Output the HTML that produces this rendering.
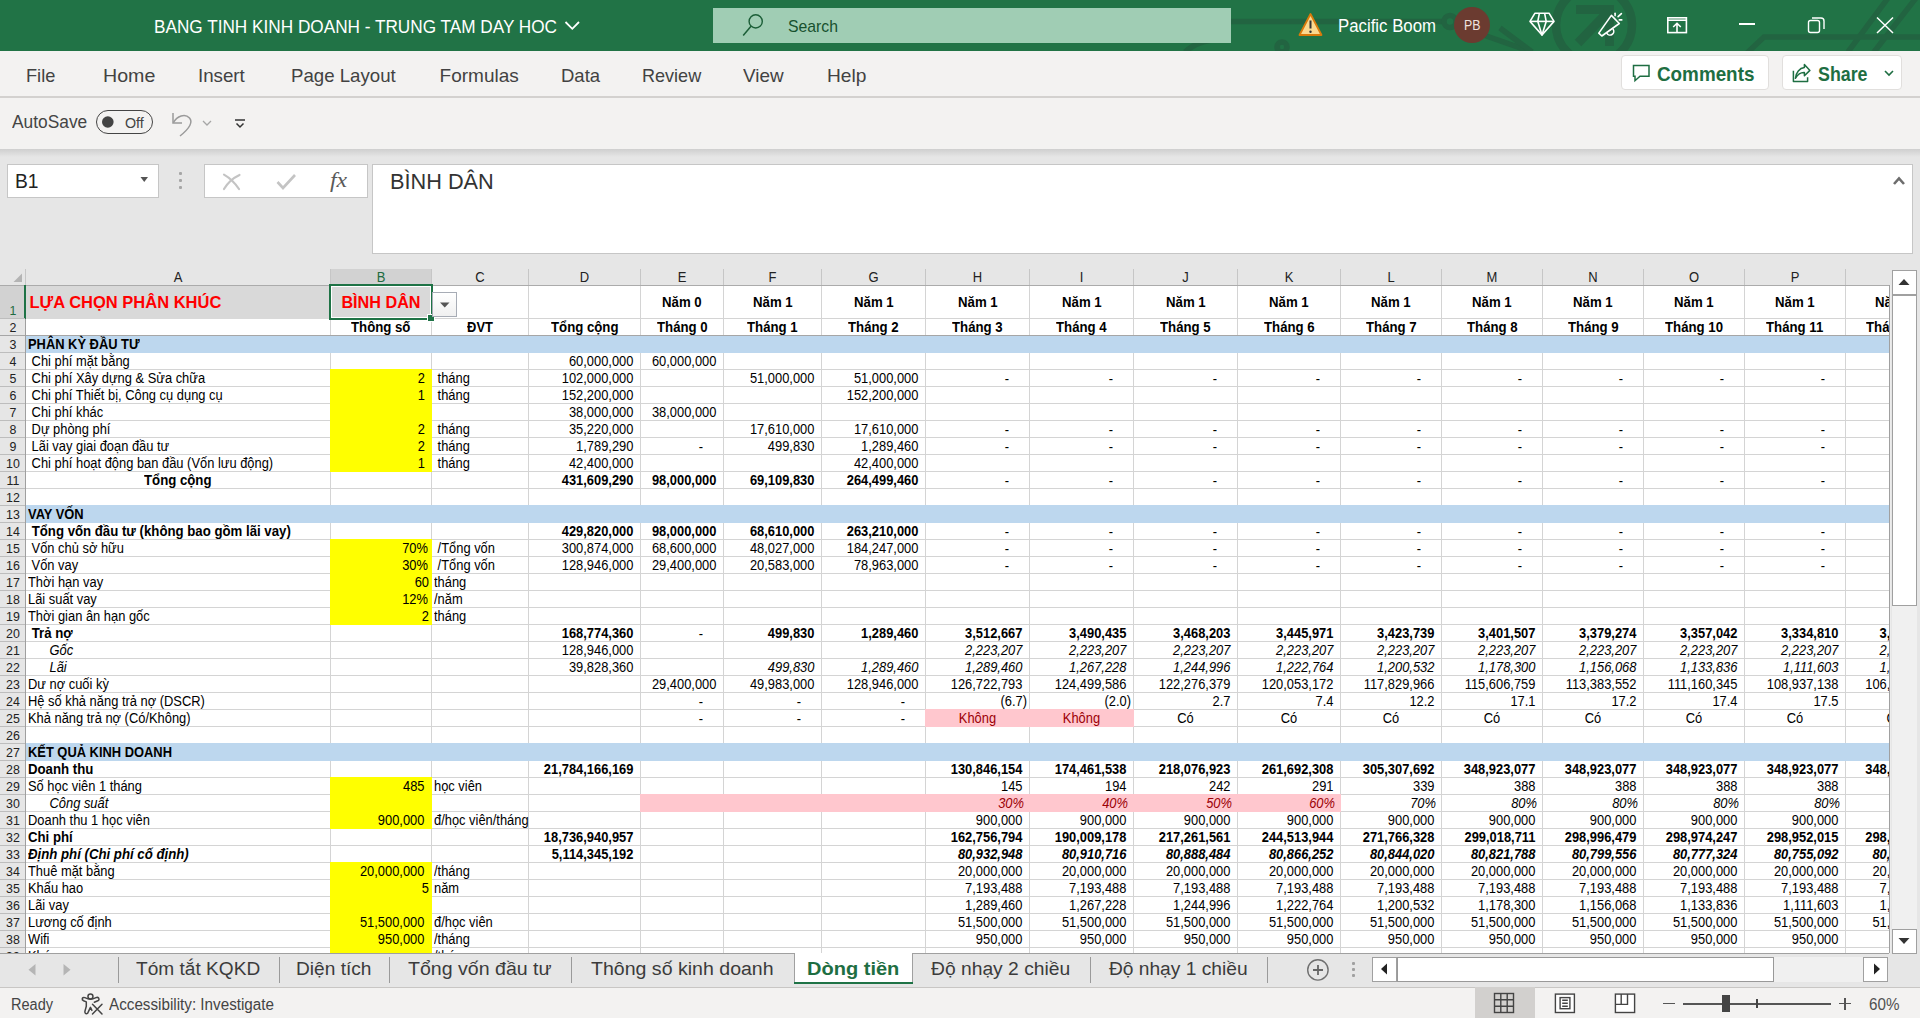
<!DOCTYPE html><html><head><meta charset="utf-8"><style>
html,body{margin:0;padding:0;}
body{width:1920px;height:1018px;overflow:hidden;position:relative;background:#e6e6e6;font-family:"Liberation Sans",sans-serif;}
.t{position:absolute;white-space:pre;line-height:1.117;}
.r{position:absolute;}
svg{position:absolute;}
#grid{position:absolute;left:0;top:269px;width:1889px;height:684px;overflow:hidden;}
#grid .t{line-height:1.117;}
</style></head><body>
<div class="r" style="left:0px;top:0px;width:1920px;height:51px;background:#217346;"></div>
<svg style="left:0;top:0" width="1920" height="51" viewBox="0 0 1920 51">
<g fill="none" stroke="#226441" stroke-width="5.5">
<path d="M1231 21.5 H1444"/><circle cx="1450" cy="21.5" r="6"/><path d="M1455 25 L1532 52"/>
<path d="M1185 52 Q1200 38 1225 40"/><circle cx="1282" cy="47" r="5"/>
<path d="M1500 28 L1532 52"/>
</g>
<g fill="none" stroke="#226441">
<circle cx="1594" cy="25" r="38" stroke-width="8.5"/>
<path d="M1576 9.5 H1609.5 V46" stroke-width="9"/>
<path d="M1607 13 L1578 43" stroke-width="9"/>
<path d="M1848 52 L1888 -2" stroke-width="5.5"/><path d="M1874 52 L1916 -2" stroke-width="5.5"/>
<path d="M1747 53 L1764 37 H1920" stroke-width="5.5"/>
</g></svg>
<div class="t" style="left:154.00px;top:16.71px;font-size:18.00px;color:#fff;transform:scale(0.9549,1.0000);transform-origin:0 16.29px;">BANG TINH KINH DOANH - TRUNG TAM DAY HOC</div>
<svg style="left:563px;top:20px" width="18" height="12"><path d="M2.5 2 L9.3 8.8 L16 2" fill="none" stroke="#fff" stroke-width="1.8"/></svg>
<div class="r" style="left:713px;top:8px;width:518px;height:35px;background:#a0cdb4;"></div>
<svg style="left:740px;top:12px" width="26" height="26"><circle cx="15.7" cy="9.4" r="6.6" fill="none" stroke="#1b5e37" stroke-width="1.4"/><path d="M11 14.3 L3.2 23.4" stroke="#1b5e37" stroke-width="1.5" fill="none"/></svg>
<div class="t" style="left:788.00px;top:16.62px;font-size:17.00px;color:#17512e;transform:scale(0.9282,1.0000);transform-origin:0 15.38px;">Search</div>
<svg style="left:1298px;top:12px" width="26" height="26"><path d="M12.5 2 L23.5 23 H1.5 Z" fill="#fbd98f" stroke="#d97a0b" stroke-width="1.8" stroke-linejoin="round"/><path d="M12.5 8.5 V16.5" stroke="#333" stroke-width="2"/><circle cx="12.5" cy="19.8" r="1.2" fill="#333"/></svg>
<div class="t" style="left:1338.00px;top:16.96px;font-size:17.50px;color:#fff;transform:scale(0.9596,1.0000);transform-origin:0 15.84px;">Pacific Boom</div>
<svg style="left:1453px;top:6px" width="38" height="38"><circle cx="19" cy="19" r="18" fill="#6b3b30"/></svg>
<div class="t" style="left:1463.75px;top:18.13px;font-size:14.00px;color:#f0e2de;transform:scale(0.8834,1.0000);transform-origin:0 12.67px;">PB</div>
<svg style="left:1520px;top:5px" width="40" height="40" viewBox="0 0 40 40"><g fill="none" stroke="#fff" stroke-width="1.6" stroke-linejoin="round">
<path d="M15 8.2 H29 L34 16.4 L22 30 L10 16.4 Z"/><path d="M10 16.4 H34"/><path d="M19.4 8.2 L17.8 16.4 L22 30 L26.2 16.4 L24.6 8.2"/></g></svg>
<svg style="left:1590px;top:5px" width="40" height="40" viewBox="0 0 40 40"><g fill="none" stroke="#fff" stroke-width="1.6" stroke-linejoin="round" stroke-linecap="round">
<path d="M21.4 10.4 L29.3 18.5 L11.8 31 L8.8 28.1 Z"/><path d="M16.9 28.3 A3.6 3.6 0 0 0 23.2 24.4"/><path d="M25.1 8.3 V10.6"/><path d="M28.1 11.6 L31.4 8.6"/><path d="M29.3 14.9 H31.8"/></g></svg>
<svg style="left:1660px;top:5px" width="34" height="36" viewBox="0 0 34 36"><g fill="none" stroke="#fff" stroke-width="1.6">
<rect x="7.8" y="12.8" width="18.6" height="14.8"/><path d="M7.8 15.2 H26.4"/><path d="M17 27.6 V18.5 M13.2 22 L17 18.3 L20.8 22"/></g></svg>
<div class="r" style="left:1739px;top:23px;width:16px;height:1.6px;background:#fff;"></div>
<svg style="left:1804px;top:14px" width="24" height="22" viewBox="0 0 24 22"><g fill="none" stroke="#fff" stroke-width="1.4">
<rect x="4.5" y="6.5" width="11" height="12" rx="2"/><path d="M8 4 H17 A3 3 0 0 1 20 7 V15"/></g></svg>
<svg style="left:1874px;top:14px" width="22" height="22" viewBox="0 0 22 22"><g fill="none" stroke="#fff" stroke-width="1.5">
<path d="M3 3.5 L19 19 M19 3.5 L3 19"/></g></svg>
<div class="r" style="left:0px;top:51px;width:1920px;height:98px;background:#f3f2f1;"></div>
<div class="r" style="left:0px;top:96px;width:1920px;height:2px;background:#d3d1cf;"></div>
<div class="t" style="left:25.70px;top:64.81px;font-size:19.00px;color:#424242;transform:scale(0.9570,1.0000);transform-origin:0 17.20px;">File</div>
<div class="t" style="left:102.70px;top:64.81px;font-size:19.00px;color:#424242;transform:scale(1.0319,1.0000);transform-origin:0 17.20px;">Home</div>
<div class="t" style="left:198.40px;top:64.81px;font-size:19.00px;color:#424242;transform:scale(0.9849,1.0000);transform-origin:0 17.20px;">Insert</div>
<div class="t" style="left:290.60px;top:64.81px;font-size:19.00px;color:#424242;transform:scale(0.9812,1.0000);transform-origin:0 17.20px;">Page Layout</div>
<div class="t" style="left:439.60px;top:64.81px;font-size:19.00px;color:#424242;">Formulas</div>
<div class="t" style="left:560.90px;top:64.81px;font-size:19.00px;color:#424242;transform:scale(0.9742,1.0000);transform-origin:0 17.20px;">Data</div>
<div class="t" style="left:641.60px;top:64.81px;font-size:19.00px;color:#424242;transform:scale(0.9503,1.0000);transform-origin:0 17.20px;">Review</div>
<div class="t" style="left:743.40px;top:64.81px;font-size:19.00px;color:#424242;transform:scale(0.9941,1.0000);transform-origin:0 17.20px;">View</div>
<div class="t" style="left:826.60px;top:64.81px;font-size:19.00px;color:#424242;transform:scale(1.0082,1.0000);transform-origin:0 17.20px;">Help</div>
<div class="r" style="left:1620.5px;top:55.3px;width:148px;height:35px;background:#fff;border:1px solid #e1dfdd;border-radius:4px;box-sizing:border-box;"></div>
<div class="r" style="left:1781.5px;top:55.3px;width:120px;height:35px;background:#fff;border:1px solid #e1dfdd;border-radius:4px;box-sizing:border-box;"></div>
<svg style="left:1630px;top:62px" width="22" height="22" viewBox="0 0 22 22"><path d="M3.5 3.5 H19 V14.3 H10 L5 18.7 V14.3 H3.5 Z" fill="none" stroke="#1e6e42" stroke-width="1.5" stroke-linejoin="miter"/></svg>
<div class="t" style="left:1657.00px;top:63.80px;font-size:19.00px;color:#1e6e42;font-weight:bold;transform:scale(0.9920,1.0900);transform-origin:0 17.20px;">Comments</div>
<svg style="left:1790px;top:62px" width="24" height="24" viewBox="0 0 24 24"><g fill="none" stroke="#1e6e42" stroke-width="1.5" stroke-linejoin="round">
<path d="M3.4 8.7 V19.6 H17.6 V15.3"/><path d="M5.4 16.3 C6 10.5 9.5 6 14.4 5.6 V2.6 L19.9 8.4 L14.4 13.8 V10.6 C10.5 10.4 7.5 12.8 5.4 16.3 Z"/></g></svg>
<div class="t" style="left:1817.50px;top:63.80px;font-size:19.00px;color:#1e6e42;font-weight:bold;transform:scale(0.9374,1.0900);transform-origin:0 17.20px;">Share</div>
<svg style="left:1882px;top:67px" width="14" height="12"><path d="M3 4 L7 8 L11 4" fill="none" stroke="#1e6e42" stroke-width="1.6"/></svg>
<div class="t" style="left:11.50px;top:112.86px;font-size:17.50px;color:#444;transform:scale(0.9909,1.0000);transform-origin:0 15.84px;">AutoSave</div>
<div class="r" style="left:96px;top:110px;width:57px;height:24px;background:transparent;border:1px solid #444;border-radius:12px;box-sizing:border-box;"></div>
<svg style="left:100px;top:115px" width="14" height="14"><circle cx="7.8" cy="7" r="5.8" fill="#444"/></svg>
<div class="t" style="left:125.30px;top:114.68px;font-size:14.50px;color:#444;transform:scale(0.9857,1.0000);transform-origin:0 13.12px;">Off</div>
<svg style="left:168px;top:108px" width="30" height="32" viewBox="0 0 30 32"><g fill="none" stroke="#9a9a9a" stroke-width="1.5">
<path d="M5 5 V15 H14"/><path d="M5.5 14.5 C9 8 17 5 21.5 10 C25 14 22 20 12 28"/></g></svg>
<svg style="left:201px;top:118px" width="12" height="10"><path d="M2 3 L6 7 L10 3" fill="none" stroke="#a6a6a6" stroke-width="1.3"/></svg>
<svg style="left:232px;top:116px" width="16" height="14"><g fill="none" stroke="#333" stroke-width="1.5"><path d="M3 4 H13"/><path d="M4.5 7.5 L8 11 L11.5 7.5"/></g></svg>
<div class="r" style="left:3px;top:9px;width:1px;height:1px;background:transparent;"></div>
<div class="r" style="left:0px;top:149px;width:1920px;height:8px;background:linear-gradient(#cfcfcf,#e6e6e6);"></div>
<div class="r" style="left:7px;top:164px;width:152px;height:34px;background:#fff;border:1px solid #c6c6c6;box-sizing:border-box;"></div>
<div class="t" style="left:15.00px;top:168.69px;font-size:21.00px;color:#222;transform:scale(0.9149,1.0000);transform-origin:0 19.00px;">B1</div>
<svg style="left:138px;top:174px" width="12" height="10"><path d="M2.5 3 H10 L6.25 8 Z" fill="#555"/></svg>
<div class="r" style="left:179px;top:172px;width:3px;height:3px;background:#a6a6a6;border-radius:1px;"></div>
<div class="r" style="left:179px;top:179px;width:3px;height:3px;background:#a6a6a6;border-radius:1px;"></div>
<div class="r" style="left:179px;top:186px;width:3px;height:3px;background:#a6a6a6;border-radius:1px;"></div>
<div class="r" style="left:204px;top:164px;width:164px;height:34px;background:#fff;border:1px solid #c6c6c6;box-sizing:border-box;"></div>
<svg style="left:220px;top:171px" width="24" height="22"><path d="M4 3.6 C10 7 15 12 19 18 M19.5 4 C12 7.5 7 13 4 18" fill="none" stroke="#c4c4c4" stroke-width="2.2" stroke-linecap="round"/></svg>
<svg style="left:274px;top:171px" width="26" height="22"><path d="M3.5 11 L9 17 L21 4" fill="none" stroke="#c4c4c4" stroke-width="2.6"/></svg>
<div class="t" style="left:330.00px;top:167.59px;font-size:22.00px;color:#5a5a5a;font-style:italic;transform:scale(1.0811,1.0000);transform-origin:0 19.91px;font-family:'Liberation Serif',serif;">fx</div>
<div class="r" style="left:372px;top:164px;width:1541px;height:90px;background:#fff;border:1px solid #c6c6c6;box-sizing:border-box;"></div>
<div class="t" style="left:390.30px;top:169.54px;font-size:21.50px;color:#333;transform:scale(1.0094,1.0000);transform-origin:0 19.46px;">BÌNH DÂN</div>
<svg style="left:1890px;top:173px" width="18" height="14"><path d="M4 11 L9 5.5 L14 11" fill="none" stroke="#6d6d6d" stroke-width="2.6"/></svg>
<div id="g" style="position:absolute;left:0;top:0;width:1889px;height:953px;overflow:hidden;">
<div class="r" style="left:26px;top:286px;width:1863px;height:667px;background:#fff;"></div>
<div class="r" style="left:330px;top:286px;width:1px;height:667px;background:#d4d4d4;"></div>
<div class="r" style="left:431px;top:286px;width:1px;height:667px;background:#d4d4d4;"></div>
<div class="r" style="left:528px;top:286px;width:1px;height:667px;background:#d4d4d4;"></div>
<div class="r" style="left:640px;top:286px;width:1px;height:667px;background:#d4d4d4;"></div>
<div class="r" style="left:723px;top:286px;width:1px;height:667px;background:#d4d4d4;"></div>
<div class="r" style="left:821px;top:286px;width:1px;height:667px;background:#d4d4d4;"></div>
<div class="r" style="left:925px;top:286px;width:1px;height:667px;background:#d4d4d4;"></div>
<div class="r" style="left:1029px;top:286px;width:1px;height:667px;background:#d4d4d4;"></div>
<div class="r" style="left:1133px;top:286px;width:1px;height:667px;background:#d4d4d4;"></div>
<div class="r" style="left:1237px;top:286px;width:1px;height:667px;background:#d4d4d4;"></div>
<div class="r" style="left:1340px;top:286px;width:1px;height:667px;background:#d4d4d4;"></div>
<div class="r" style="left:1441px;top:286px;width:1px;height:667px;background:#d4d4d4;"></div>
<div class="r" style="left:1542px;top:286px;width:1px;height:667px;background:#d4d4d4;"></div>
<div class="r" style="left:1643px;top:286px;width:1px;height:667px;background:#d4d4d4;"></div>
<div class="r" style="left:1744px;top:286px;width:1px;height:667px;background:#d4d4d4;"></div>
<div class="r" style="left:1845px;top:286px;width:1px;height:667px;background:#d4d4d4;"></div>
<div class="r" style="left:26px;top:318px;width:1863px;height:1px;background:#d4d4d4;"></div>
<div class="r" style="left:26px;top:335px;width:1863px;height:1px;background:#d4d4d4;"></div>
<div class="r" style="left:26px;top:352px;width:1863px;height:1px;background:#d4d4d4;"></div>
<div class="r" style="left:26px;top:369px;width:1863px;height:1px;background:#d4d4d4;"></div>
<div class="r" style="left:26px;top:386px;width:1863px;height:1px;background:#d4d4d4;"></div>
<div class="r" style="left:26px;top:403px;width:1863px;height:1px;background:#d4d4d4;"></div>
<div class="r" style="left:26px;top:420px;width:1863px;height:1px;background:#d4d4d4;"></div>
<div class="r" style="left:26px;top:437px;width:1863px;height:1px;background:#d4d4d4;"></div>
<div class="r" style="left:26px;top:454px;width:1863px;height:1px;background:#d4d4d4;"></div>
<div class="r" style="left:26px;top:471px;width:1863px;height:1px;background:#d4d4d4;"></div>
<div class="r" style="left:26px;top:488px;width:1863px;height:1px;background:#d4d4d4;"></div>
<div class="r" style="left:26px;top:505px;width:1863px;height:1px;background:#d4d4d4;"></div>
<div class="r" style="left:26px;top:522px;width:1863px;height:1px;background:#d4d4d4;"></div>
<div class="r" style="left:26px;top:539px;width:1863px;height:1px;background:#d4d4d4;"></div>
<div class="r" style="left:26px;top:556px;width:1863px;height:1px;background:#d4d4d4;"></div>
<div class="r" style="left:26px;top:573px;width:1863px;height:1px;background:#d4d4d4;"></div>
<div class="r" style="left:26px;top:590px;width:1863px;height:1px;background:#d4d4d4;"></div>
<div class="r" style="left:26px;top:607px;width:1863px;height:1px;background:#d4d4d4;"></div>
<div class="r" style="left:26px;top:624px;width:1863px;height:1px;background:#d4d4d4;"></div>
<div class="r" style="left:26px;top:641px;width:1863px;height:1px;background:#d4d4d4;"></div>
<div class="r" style="left:26px;top:658px;width:1863px;height:1px;background:#d4d4d4;"></div>
<div class="r" style="left:26px;top:675px;width:1863px;height:1px;background:#d4d4d4;"></div>
<div class="r" style="left:26px;top:692px;width:1863px;height:1px;background:#d4d4d4;"></div>
<div class="r" style="left:26px;top:709px;width:1863px;height:1px;background:#d4d4d4;"></div>
<div class="r" style="left:26px;top:726px;width:1863px;height:1px;background:#d4d4d4;"></div>
<div class="r" style="left:26px;top:743px;width:1863px;height:1px;background:#d4d4d4;"></div>
<div class="r" style="left:26px;top:760px;width:1863px;height:1px;background:#d4d4d4;"></div>
<div class="r" style="left:26px;top:777px;width:1863px;height:1px;background:#d4d4d4;"></div>
<div class="r" style="left:26px;top:794px;width:1863px;height:1px;background:#d4d4d4;"></div>
<div class="r" style="left:26px;top:811px;width:1863px;height:1px;background:#d4d4d4;"></div>
<div class="r" style="left:26px;top:828px;width:1863px;height:1px;background:#d4d4d4;"></div>
<div class="r" style="left:26px;top:845px;width:1863px;height:1px;background:#d4d4d4;"></div>
<div class="r" style="left:26px;top:862px;width:1863px;height:1px;background:#d4d4d4;"></div>
<div class="r" style="left:26px;top:879px;width:1863px;height:1px;background:#d4d4d4;"></div>
<div class="r" style="left:26px;top:896px;width:1863px;height:1px;background:#d4d4d4;"></div>
<div class="r" style="left:26px;top:913px;width:1863px;height:1px;background:#d4d4d4;"></div>
<div class="r" style="left:26px;top:930px;width:1863px;height:1px;background:#d4d4d4;"></div>
<div class="r" style="left:26px;top:947px;width:1863px;height:1px;background:#d4d4d4;"></div>
<div class="r" style="left:26px;top:964px;width:1863px;height:1px;background:#d4d4d4;"></div>
<div class="r" style="left:25px;top:285px;width:407px;height:34px;background:#d9d9d9;"></div>
<div class="r" style="left:26px;top:335px;width:1863px;height:18px;background:#bdd7ee;"></div>
<div class="r" style="left:26px;top:505px;width:1863px;height:18px;background:#bdd7ee;"></div>
<div class="r" style="left:26px;top:743px;width:1863px;height:18px;background:#bdd7ee;"></div>
<div class="r" style="left:330px;top:369px;width:102px;height:103px;background:#ffff00;"></div>
<div class="r" style="left:330px;top:539px;width:102px;height:86px;background:#ffff00;"></div>
<div class="r" style="left:330px;top:777px;width:102px;height:52px;background:#ffff00;"></div>
<div class="r" style="left:330px;top:862px;width:102px;height:120px;background:#ffff00;"></div>
<div class="r" style="left:925px;top:709px;width:209px;height:18px;background:#ffc7ce;"></div>
<div class="r" style="left:640px;top:794px;width:701px;height:18px;background:#ffc7ce;"></div>
<div class="r" style="left:26px;top:335px;width:1863px;height:1px;background:#a6a6a6;"></div>
<div class="t" style="left:29.50px;top:292.97px;font-size:16.50px;color:#ff0000;font-weight:bold;">LỰA CHỌN PHÂN KHÚC</div>
<div class="t" style="left:341.40px;top:293.24px;font-size:16.20px;color:#ff0000;font-weight:bold;">BÌNH DÂN</div>
<div class="t" style="left:662.16px;top:295.93px;font-size:12.90px;color:#000;font-weight:bold;transform:scale(1.0250,1.1000);transform-origin:0 11.67px;">Năm 0</div>
<div class="t" style="left:656.66px;top:320.93px;font-size:12.90px;color:#000;font-weight:bold;transform:scale(1.0250,1.1000);transform-origin:0 11.67px;">Tháng 0</div>
<div class="t" style="left:752.66px;top:295.93px;font-size:12.90px;color:#000;font-weight:bold;transform:scale(1.0250,1.1000);transform-origin:0 11.67px;">Năm 1</div>
<div class="t" style="left:747.16px;top:320.93px;font-size:12.90px;color:#000;font-weight:bold;transform:scale(1.0250,1.1000);transform-origin:0 11.67px;">Tháng 1</div>
<div class="t" style="left:853.66px;top:295.93px;font-size:12.90px;color:#000;font-weight:bold;transform:scale(1.0250,1.1000);transform-origin:0 11.67px;">Năm 1</div>
<div class="t" style="left:848.16px;top:320.93px;font-size:12.90px;color:#000;font-weight:bold;transform:scale(1.0250,1.1000);transform-origin:0 11.67px;">Tháng 2</div>
<div class="t" style="left:957.66px;top:295.93px;font-size:12.90px;color:#000;font-weight:bold;transform:scale(1.0250,1.1000);transform-origin:0 11.67px;">Năm 1</div>
<div class="t" style="left:952.16px;top:320.93px;font-size:12.90px;color:#000;font-weight:bold;transform:scale(1.0250,1.1000);transform-origin:0 11.67px;">Tháng 3</div>
<div class="t" style="left:1061.66px;top:295.93px;font-size:12.90px;color:#000;font-weight:bold;transform:scale(1.0250,1.1000);transform-origin:0 11.67px;">Năm 1</div>
<div class="t" style="left:1056.16px;top:320.93px;font-size:12.90px;color:#000;font-weight:bold;transform:scale(1.0250,1.1000);transform-origin:0 11.67px;">Tháng 4</div>
<div class="t" style="left:1165.66px;top:295.93px;font-size:12.90px;color:#000;font-weight:bold;transform:scale(1.0250,1.1000);transform-origin:0 11.67px;">Năm 1</div>
<div class="t" style="left:1160.16px;top:320.93px;font-size:12.90px;color:#000;font-weight:bold;transform:scale(1.0250,1.1000);transform-origin:0 11.67px;">Tháng 5</div>
<div class="t" style="left:1269.16px;top:295.93px;font-size:12.90px;color:#000;font-weight:bold;transform:scale(1.0250,1.1000);transform-origin:0 11.67px;">Năm 1</div>
<div class="t" style="left:1263.66px;top:320.93px;font-size:12.90px;color:#000;font-weight:bold;transform:scale(1.0250,1.1000);transform-origin:0 11.67px;">Tháng 6</div>
<div class="t" style="left:1371.16px;top:295.93px;font-size:12.90px;color:#000;font-weight:bold;transform:scale(1.0250,1.1000);transform-origin:0 11.67px;">Năm 1</div>
<div class="t" style="left:1365.66px;top:320.93px;font-size:12.90px;color:#000;font-weight:bold;transform:scale(1.0250,1.1000);transform-origin:0 11.67px;">Tháng 7</div>
<div class="t" style="left:1472.16px;top:295.93px;font-size:12.90px;color:#000;font-weight:bold;transform:scale(1.0250,1.1000);transform-origin:0 11.67px;">Năm 1</div>
<div class="t" style="left:1466.66px;top:320.93px;font-size:12.90px;color:#000;font-weight:bold;transform:scale(1.0250,1.1000);transform-origin:0 11.67px;">Tháng 8</div>
<div class="t" style="left:1573.16px;top:295.93px;font-size:12.90px;color:#000;font-weight:bold;transform:scale(1.0250,1.1000);transform-origin:0 11.67px;">Năm 1</div>
<div class="t" style="left:1567.66px;top:320.93px;font-size:12.90px;color:#000;font-weight:bold;transform:scale(1.0250,1.1000);transform-origin:0 11.67px;">Tháng 9</div>
<div class="t" style="left:1674.16px;top:295.93px;font-size:12.90px;color:#000;font-weight:bold;transform:scale(1.0250,1.1000);transform-origin:0 11.67px;">Năm 1</div>
<div class="t" style="left:1664.98px;top:320.93px;font-size:12.90px;color:#000;font-weight:bold;transform:scale(1.0250,1.1000);transform-origin:0 11.67px;">Tháng 10</div>
<div class="t" style="left:1775.16px;top:295.93px;font-size:12.90px;color:#000;font-weight:bold;transform:scale(1.0250,1.1000);transform-origin:0 11.67px;">Năm 1</div>
<div class="t" style="left:1766.34px;top:320.93px;font-size:12.90px;color:#000;font-weight:bold;transform:scale(1.0250,1.1000);transform-origin:0 11.67px;">Tháng 11</div>
<div class="t" style="left:1874.91px;top:295.93px;font-size:12.90px;color:#000;font-weight:bold;transform:scale(1.0250,1.1000);transform-origin:0 11.67px;">Năm 1</div>
<div class="t" style="left:1865.73px;top:320.93px;font-size:12.90px;color:#000;font-weight:bold;transform:scale(1.0250,1.1000);transform-origin:0 11.67px;">Tháng 12</div>
<div class="t" style="left:351.26px;top:320.93px;font-size:12.90px;color:#000;font-weight:bold;transform:scale(1.0250,1.1000);transform-origin:0 11.67px;">Thông số</div>
<div class="t" style="left:467.10px;top:320.93px;font-size:12.90px;color:#000;font-weight:bold;transform:scale(1.0000,1.1000);transform-origin:0 11.67px;">ĐVT</div>
<div class="t" style="left:550.72px;top:320.93px;font-size:12.90px;color:#000;font-weight:bold;transform:scale(1.0250,1.1000);transform-origin:0 11.67px;">Tổng cộng</div>
<div class="t" style="left:28.00px;top:337.93px;font-size:12.90px;color:#000;font-weight:bold;transform:scale(1.0000,1.1000);transform-origin:0 11.67px;">PHÂN KỲ ĐẦU TƯ</div>
<div class="t" style="left:28.00px;top:354.93px;font-size:12.90px;color:#000;transform:scale(1.0000,1.1000);transform-origin:0 11.67px;"> Chi phí mặt bằng</div>
<div class="t" style="left:28.00px;top:371.93px;font-size:12.90px;color:#000;transform:scale(1.0000,1.1000);transform-origin:0 11.67px;"> Chi phí Xây dựng &amp; Sửa chữa</div>
<div class="t" style="left:28.00px;top:388.93px;font-size:12.90px;color:#000;transform:scale(1.0000,1.1000);transform-origin:0 11.67px;"> Chi phí Thiết bị, Công cụ dụng cụ</div>
<div class="t" style="left:28.00px;top:405.93px;font-size:12.90px;color:#000;transform:scale(1.0000,1.1000);transform-origin:0 11.67px;"> Chi phí khác</div>
<div class="t" style="left:28.00px;top:422.93px;font-size:12.90px;color:#000;transform:scale(1.0000,1.1000);transform-origin:0 11.67px;"> Dự phòng phí</div>
<div class="t" style="left:28.00px;top:439.93px;font-size:12.90px;color:#000;transform:scale(1.0000,1.1000);transform-origin:0 11.67px;"> Lãi vay giai đoạn đầu tư</div>
<div class="t" style="left:28.00px;top:456.93px;font-size:12.90px;color:#000;transform:scale(1.0000,1.1000);transform-origin:0 11.67px;"> Chi phí hoạt động ban đầu (Vốn lưu động)</div>
<div class="t" style="left:144.22px;top:473.93px;font-size:12.90px;color:#000;font-weight:bold;transform:scale(1.0250,1.1000);transform-origin:0 11.67px;">Tổng cộng</div>
<div class="t" style="left:417.63px;top:371.93px;font-size:12.90px;color:#000;transform:scale(1.0000,1.1000);transform-origin:0 11.67px;">2</div>
<div class="t" style="left:434.00px;top:371.93px;font-size:12.90px;color:#000;transform:scale(1.0000,1.1000);transform-origin:0 11.67px;"> tháng</div>
<div class="t" style="left:417.63px;top:388.93px;font-size:12.90px;color:#000;transform:scale(1.0000,1.1000);transform-origin:0 11.67px;">1</div>
<div class="t" style="left:434.00px;top:388.93px;font-size:12.90px;color:#000;transform:scale(1.0000,1.1000);transform-origin:0 11.67px;"> tháng</div>
<div class="t" style="left:417.63px;top:422.93px;font-size:12.90px;color:#000;transform:scale(1.0000,1.1000);transform-origin:0 11.67px;">2</div>
<div class="t" style="left:434.00px;top:422.93px;font-size:12.90px;color:#000;transform:scale(1.0000,1.1000);transform-origin:0 11.67px;"> tháng</div>
<div class="t" style="left:417.63px;top:439.93px;font-size:12.90px;color:#000;transform:scale(1.0000,1.1000);transform-origin:0 11.67px;">2</div>
<div class="t" style="left:434.00px;top:439.93px;font-size:12.90px;color:#000;transform:scale(1.0000,1.1000);transform-origin:0 11.67px;"> tháng</div>
<div class="t" style="left:417.63px;top:456.93px;font-size:12.90px;color:#000;transform:scale(1.0000,1.1000);transform-origin:0 11.67px;">1</div>
<div class="t" style="left:434.00px;top:456.93px;font-size:12.90px;color:#000;transform:scale(1.0000,1.1000);transform-origin:0 11.67px;"> tháng</div>
<div class="t" style="left:568.94px;top:354.93px;font-size:12.90px;color:#000;transform:scale(1.0000,1.1000);transform-origin:0 11.67px;">60,000,000</div>
<div class="t" style="left:561.76px;top:371.93px;font-size:12.90px;color:#000;transform:scale(1.0000,1.1000);transform-origin:0 11.67px;">102,000,000</div>
<div class="t" style="left:561.76px;top:388.93px;font-size:12.90px;color:#000;transform:scale(1.0000,1.1000);transform-origin:0 11.67px;">152,200,000</div>
<div class="t" style="left:568.94px;top:405.93px;font-size:12.90px;color:#000;transform:scale(1.0000,1.1000);transform-origin:0 11.67px;">38,000,000</div>
<div class="t" style="left:568.94px;top:422.93px;font-size:12.90px;color:#000;transform:scale(1.0000,1.1000);transform-origin:0 11.67px;">35,220,000</div>
<div class="t" style="left:576.11px;top:439.93px;font-size:12.90px;color:#000;transform:scale(1.0000,1.1000);transform-origin:0 11.67px;">1,789,290</div>
<div class="t" style="left:568.94px;top:456.93px;font-size:12.90px;color:#000;transform:scale(1.0000,1.1000);transform-origin:0 11.67px;">42,400,000</div>
<div class="t" style="left:561.76px;top:473.93px;font-size:12.90px;color:#000;font-weight:bold;transform:scale(1.0000,1.1000);transform-origin:0 11.67px;">431,609,290</div>
<div class="t" style="left:651.94px;top:354.93px;font-size:12.90px;color:#000;transform:scale(1.0000,1.1000);transform-origin:0 11.67px;">60,000,000</div>
<div class="t" style="left:651.94px;top:405.93px;font-size:12.90px;color:#000;transform:scale(1.0000,1.1000);transform-origin:0 11.67px;">38,000,000</div>
<div class="t" style="left:698.70px;top:440.73px;font-size:12.90px;color:#000;transform:scale(1.0000,1.1000);transform-origin:0 11.67px;">-</div>
<div class="t" style="left:651.94px;top:473.93px;font-size:12.90px;color:#000;font-weight:bold;transform:scale(1.0000,1.1000);transform-origin:0 11.67px;">98,000,000</div>
<div class="t" style="left:749.94px;top:371.93px;font-size:12.90px;color:#000;transform:scale(1.0000,1.1000);transform-origin:0 11.67px;">51,000,000</div>
<div class="t" style="left:749.94px;top:422.93px;font-size:12.90px;color:#000;transform:scale(1.0000,1.1000);transform-origin:0 11.67px;">17,610,000</div>
<div class="t" style="left:767.87px;top:439.93px;font-size:12.90px;color:#000;transform:scale(1.0000,1.1000);transform-origin:0 11.67px;">499,830</div>
<div class="t" style="left:749.94px;top:473.93px;font-size:12.90px;color:#000;font-weight:bold;transform:scale(1.0000,1.1000);transform-origin:0 11.67px;">69,109,830</div>
<div class="t" style="left:853.94px;top:371.93px;font-size:12.90px;color:#000;transform:scale(1.0000,1.1000);transform-origin:0 11.67px;">51,000,000</div>
<div class="t" style="left:846.76px;top:388.93px;font-size:12.90px;color:#000;transform:scale(1.0000,1.1000);transform-origin:0 11.67px;">152,200,000</div>
<div class="t" style="left:853.94px;top:422.93px;font-size:12.90px;color:#000;transform:scale(1.0000,1.1000);transform-origin:0 11.67px;">17,610,000</div>
<div class="t" style="left:861.11px;top:439.93px;font-size:12.90px;color:#000;transform:scale(1.0000,1.1000);transform-origin:0 11.67px;">1,289,460</div>
<div class="t" style="left:853.94px;top:456.93px;font-size:12.90px;color:#000;transform:scale(1.0000,1.1000);transform-origin:0 11.67px;">42,400,000</div>
<div class="t" style="left:846.76px;top:473.93px;font-size:12.90px;color:#000;font-weight:bold;transform:scale(1.0000,1.1000);transform-origin:0 11.67px;">264,499,460</div>
<div class="t" style="left:1004.70px;top:372.73px;font-size:12.90px;color:#000;transform:scale(1.0000,1.1000);transform-origin:0 11.67px;">-</div>
<div class="t" style="left:1004.70px;top:423.73px;font-size:12.90px;color:#000;transform:scale(1.0000,1.1000);transform-origin:0 11.67px;">-</div>
<div class="t" style="left:1004.70px;top:440.73px;font-size:12.90px;color:#000;transform:scale(1.0000,1.1000);transform-origin:0 11.67px;">-</div>
<div class="t" style="left:1004.70px;top:474.73px;font-size:12.90px;color:#000;transform:scale(1.0000,1.1000);transform-origin:0 11.67px;">-</div>
<div class="t" style="left:1108.70px;top:372.73px;font-size:12.90px;color:#000;transform:scale(1.0000,1.1000);transform-origin:0 11.67px;">-</div>
<div class="t" style="left:1108.70px;top:423.73px;font-size:12.90px;color:#000;transform:scale(1.0000,1.1000);transform-origin:0 11.67px;">-</div>
<div class="t" style="left:1108.70px;top:440.73px;font-size:12.90px;color:#000;transform:scale(1.0000,1.1000);transform-origin:0 11.67px;">-</div>
<div class="t" style="left:1108.70px;top:474.73px;font-size:12.90px;color:#000;transform:scale(1.0000,1.1000);transform-origin:0 11.67px;">-</div>
<div class="t" style="left:1212.70px;top:372.73px;font-size:12.90px;color:#000;transform:scale(1.0000,1.1000);transform-origin:0 11.67px;">-</div>
<div class="t" style="left:1212.70px;top:423.73px;font-size:12.90px;color:#000;transform:scale(1.0000,1.1000);transform-origin:0 11.67px;">-</div>
<div class="t" style="left:1212.70px;top:440.73px;font-size:12.90px;color:#000;transform:scale(1.0000,1.1000);transform-origin:0 11.67px;">-</div>
<div class="t" style="left:1212.70px;top:474.73px;font-size:12.90px;color:#000;transform:scale(1.0000,1.1000);transform-origin:0 11.67px;">-</div>
<div class="t" style="left:1315.70px;top:372.73px;font-size:12.90px;color:#000;transform:scale(1.0000,1.1000);transform-origin:0 11.67px;">-</div>
<div class="t" style="left:1315.70px;top:423.73px;font-size:12.90px;color:#000;transform:scale(1.0000,1.1000);transform-origin:0 11.67px;">-</div>
<div class="t" style="left:1315.70px;top:440.73px;font-size:12.90px;color:#000;transform:scale(1.0000,1.1000);transform-origin:0 11.67px;">-</div>
<div class="t" style="left:1315.70px;top:474.73px;font-size:12.90px;color:#000;transform:scale(1.0000,1.1000);transform-origin:0 11.67px;">-</div>
<div class="t" style="left:1416.70px;top:372.73px;font-size:12.90px;color:#000;transform:scale(1.0000,1.1000);transform-origin:0 11.67px;">-</div>
<div class="t" style="left:1416.70px;top:423.73px;font-size:12.90px;color:#000;transform:scale(1.0000,1.1000);transform-origin:0 11.67px;">-</div>
<div class="t" style="left:1416.70px;top:440.73px;font-size:12.90px;color:#000;transform:scale(1.0000,1.1000);transform-origin:0 11.67px;">-</div>
<div class="t" style="left:1416.70px;top:474.73px;font-size:12.90px;color:#000;transform:scale(1.0000,1.1000);transform-origin:0 11.67px;">-</div>
<div class="t" style="left:1517.70px;top:372.73px;font-size:12.90px;color:#000;transform:scale(1.0000,1.1000);transform-origin:0 11.67px;">-</div>
<div class="t" style="left:1517.70px;top:423.73px;font-size:12.90px;color:#000;transform:scale(1.0000,1.1000);transform-origin:0 11.67px;">-</div>
<div class="t" style="left:1517.70px;top:440.73px;font-size:12.90px;color:#000;transform:scale(1.0000,1.1000);transform-origin:0 11.67px;">-</div>
<div class="t" style="left:1517.70px;top:474.73px;font-size:12.90px;color:#000;transform:scale(1.0000,1.1000);transform-origin:0 11.67px;">-</div>
<div class="t" style="left:1618.70px;top:372.73px;font-size:12.90px;color:#000;transform:scale(1.0000,1.1000);transform-origin:0 11.67px;">-</div>
<div class="t" style="left:1618.70px;top:423.73px;font-size:12.90px;color:#000;transform:scale(1.0000,1.1000);transform-origin:0 11.67px;">-</div>
<div class="t" style="left:1618.70px;top:440.73px;font-size:12.90px;color:#000;transform:scale(1.0000,1.1000);transform-origin:0 11.67px;">-</div>
<div class="t" style="left:1618.70px;top:474.73px;font-size:12.90px;color:#000;transform:scale(1.0000,1.1000);transform-origin:0 11.67px;">-</div>
<div class="t" style="left:1719.70px;top:372.73px;font-size:12.90px;color:#000;transform:scale(1.0000,1.1000);transform-origin:0 11.67px;">-</div>
<div class="t" style="left:1719.70px;top:423.73px;font-size:12.90px;color:#000;transform:scale(1.0000,1.1000);transform-origin:0 11.67px;">-</div>
<div class="t" style="left:1719.70px;top:440.73px;font-size:12.90px;color:#000;transform:scale(1.0000,1.1000);transform-origin:0 11.67px;">-</div>
<div class="t" style="left:1719.70px;top:474.73px;font-size:12.90px;color:#000;transform:scale(1.0000,1.1000);transform-origin:0 11.67px;">-</div>
<div class="t" style="left:1820.70px;top:372.73px;font-size:12.90px;color:#000;transform:scale(1.0000,1.1000);transform-origin:0 11.67px;">-</div>
<div class="t" style="left:1820.70px;top:423.73px;font-size:12.90px;color:#000;transform:scale(1.0000,1.1000);transform-origin:0 11.67px;">-</div>
<div class="t" style="left:1820.70px;top:440.73px;font-size:12.90px;color:#000;transform:scale(1.0000,1.1000);transform-origin:0 11.67px;">-</div>
<div class="t" style="left:1820.70px;top:474.73px;font-size:12.90px;color:#000;transform:scale(1.0000,1.1000);transform-origin:0 11.67px;">-</div>
<div class="t" style="left:1919.20px;top:372.73px;font-size:12.90px;color:#000;transform:scale(1.0000,1.1000);transform-origin:0 11.67px;">-</div>
<div class="t" style="left:1919.20px;top:423.73px;font-size:12.90px;color:#000;transform:scale(1.0000,1.1000);transform-origin:0 11.67px;">-</div>
<div class="t" style="left:1919.20px;top:440.73px;font-size:12.90px;color:#000;transform:scale(1.0000,1.1000);transform-origin:0 11.67px;">-</div>
<div class="t" style="left:1919.20px;top:474.73px;font-size:12.90px;color:#000;transform:scale(1.0000,1.1000);transform-origin:0 11.67px;">-</div>
<div class="t" style="left:28.00px;top:507.93px;font-size:12.90px;color:#000;font-weight:bold;transform:scale(1.0000,1.1000);transform-origin:0 11.67px;">VAY VỐN</div>
<div class="t" style="left:28.00px;top:524.93px;font-size:12.90px;color:#000;font-weight:bold;transform:scale(1.0250,1.1000);transform-origin:0 11.67px;"> Tổng vốn đầu tư (không bao gồm lãi vay)</div>
<div class="t" style="left:28.00px;top:541.93px;font-size:12.90px;color:#000;transform:scale(1.0000,1.1000);transform-origin:0 11.67px;"> Vốn chủ sở hữu</div>
<div class="t" style="left:28.00px;top:558.93px;font-size:12.90px;color:#000;transform:scale(1.0000,1.1000);transform-origin:0 11.67px;"> Vốn vay</div>
<div class="t" style="left:28.00px;top:575.93px;font-size:12.90px;color:#000;transform:scale(1.0000,1.1000);transform-origin:0 11.67px;">Thời hạn vay</div>
<div class="t" style="left:28.00px;top:592.93px;font-size:12.90px;color:#000;transform:scale(1.0000,1.1000);transform-origin:0 11.67px;">Lãi suất vay</div>
<div class="t" style="left:28.00px;top:609.93px;font-size:12.90px;color:#000;transform:scale(1.0000,1.1000);transform-origin:0 11.67px;">Thời gian ân hạn gốc</div>
<div class="t" style="left:28.00px;top:626.93px;font-size:12.90px;color:#000;font-weight:bold;transform:scale(1.0250,1.1000);transform-origin:0 11.67px;"> Trả nợ</div>
<div class="t" style="left:28.00px;top:643.93px;font-size:12.90px;color:#000;font-style:italic;transform:scale(1.0000,1.1000);transform-origin:0 11.67px;">      Gốc</div>
<div class="t" style="left:28.00px;top:660.93px;font-size:12.90px;color:#000;font-style:italic;transform:scale(1.0000,1.1000);transform-origin:0 11.67px;">      Lãi</div>
<div class="t" style="left:28.00px;top:677.93px;font-size:12.90px;color:#000;transform:scale(1.0000,1.1000);transform-origin:0 11.67px;">Dư nợ cuối kỳ</div>
<div class="t" style="left:28.00px;top:694.93px;font-size:12.90px;color:#000;transform:scale(1.0000,1.1000);transform-origin:0 11.67px;">Hệ số khả năng trả nợ (DSCR)</div>
<div class="t" style="left:28.00px;top:711.93px;font-size:12.90px;color:#000;transform:scale(1.0000,1.1000);transform-origin:0 11.67px;">Khả năng trả nợ (Có/Không)</div>
<div class="t" style="left:402.18px;top:541.93px;font-size:12.90px;color:#000;transform:scale(1.0000,1.1000);transform-origin:0 11.67px;">70%</div>
<div class="t" style="left:402.18px;top:558.93px;font-size:12.90px;color:#000;transform:scale(1.0000,1.1000);transform-origin:0 11.67px;">30%</div>
<div class="t" style="left:414.65px;top:575.93px;font-size:12.90px;color:#000;transform:scale(1.0000,1.1000);transform-origin:0 11.67px;">60</div>
<div class="t" style="left:402.18px;top:592.93px;font-size:12.90px;color:#000;transform:scale(1.0000,1.1000);transform-origin:0 11.67px;">12%</div>
<div class="t" style="left:421.83px;top:609.93px;font-size:12.90px;color:#000;transform:scale(1.0000,1.1000);transform-origin:0 11.67px;">2</div>
<div class="t" style="left:434.00px;top:541.93px;font-size:12.90px;color:#000;transform:scale(1.0000,1.1000);transform-origin:0 11.67px;"> /Tổng vốn</div>
<div class="t" style="left:434.00px;top:558.93px;font-size:12.90px;color:#000;transform:scale(1.0000,1.1000);transform-origin:0 11.67px;"> /Tổng vốn</div>
<div class="t" style="left:434.00px;top:575.93px;font-size:12.90px;color:#000;transform:scale(1.0000,1.1000);transform-origin:0 11.67px;">tháng</div>
<div class="t" style="left:434.00px;top:592.93px;font-size:12.90px;color:#000;transform:scale(1.0000,1.1000);transform-origin:0 11.67px;">/năm</div>
<div class="t" style="left:434.00px;top:609.93px;font-size:12.90px;color:#000;transform:scale(1.0000,1.1000);transform-origin:0 11.67px;">tháng</div>
<div class="t" style="left:561.76px;top:524.93px;font-size:12.90px;color:#000;font-weight:bold;transform:scale(1.0000,1.1000);transform-origin:0 11.67px;">429,820,000</div>
<div class="t" style="left:561.76px;top:541.93px;font-size:12.90px;color:#000;transform:scale(1.0000,1.1000);transform-origin:0 11.67px;">300,874,000</div>
<div class="t" style="left:561.76px;top:558.93px;font-size:12.90px;color:#000;transform:scale(1.0000,1.1000);transform-origin:0 11.67px;">128,946,000</div>
<div class="t" style="left:561.76px;top:626.93px;font-size:12.90px;color:#000;font-weight:bold;transform:scale(1.0000,1.1000);transform-origin:0 11.67px;">168,774,360</div>
<div class="t" style="left:561.76px;top:643.93px;font-size:12.90px;color:#000;transform:scale(1.0000,1.1000);transform-origin:0 11.67px;">128,946,000</div>
<div class="t" style="left:568.94px;top:660.93px;font-size:12.90px;color:#000;transform:scale(1.0000,1.1000);transform-origin:0 11.67px;">39,828,360</div>
<div class="t" style="left:651.94px;top:524.93px;font-size:12.90px;color:#000;font-weight:bold;transform:scale(1.0000,1.1000);transform-origin:0 11.67px;">98,000,000</div>
<div class="t" style="left:651.94px;top:541.93px;font-size:12.90px;color:#000;transform:scale(1.0000,1.1000);transform-origin:0 11.67px;">68,600,000</div>
<div class="t" style="left:651.94px;top:558.93px;font-size:12.90px;color:#000;transform:scale(1.0000,1.1000);transform-origin:0 11.67px;">29,400,000</div>
<div class="t" style="left:698.70px;top:627.73px;font-size:12.90px;color:#000;transform:scale(1.0000,1.1000);transform-origin:0 11.67px;">-</div>
<div class="t" style="left:651.94px;top:677.93px;font-size:12.90px;color:#000;transform:scale(1.0000,1.1000);transform-origin:0 11.67px;">29,400,000</div>
<div class="t" style="left:698.70px;top:695.73px;font-size:12.90px;color:#000;transform:scale(1.0000,1.1000);transform-origin:0 11.67px;">-</div>
<div class="t" style="left:698.70px;top:712.73px;font-size:12.90px;color:#000;transform:scale(1.0000,1.1000);transform-origin:0 11.67px;">-</div>
<div class="t" style="left:749.94px;top:524.93px;font-size:12.90px;color:#000;font-weight:bold;transform:scale(1.0000,1.1000);transform-origin:0 11.67px;">68,610,000</div>
<div class="t" style="left:749.94px;top:541.93px;font-size:12.90px;color:#000;transform:scale(1.0000,1.1000);transform-origin:0 11.67px;">48,027,000</div>
<div class="t" style="left:749.94px;top:558.93px;font-size:12.90px;color:#000;transform:scale(1.0000,1.1000);transform-origin:0 11.67px;">20,583,000</div>
<div class="t" style="left:767.87px;top:626.93px;font-size:12.90px;color:#000;font-weight:bold;transform:scale(1.0000,1.1000);transform-origin:0 11.67px;">499,830</div>
<div class="t" style="left:767.87px;top:660.93px;font-size:12.90px;color:#000;font-style:italic;transform:scale(1.0000,1.1000);transform-origin:0 11.67px;">499,830</div>
<div class="t" style="left:749.94px;top:677.93px;font-size:12.90px;color:#000;transform:scale(1.0000,1.1000);transform-origin:0 11.67px;">49,983,000</div>
<div class="t" style="left:796.70px;top:695.73px;font-size:12.90px;color:#000;transform:scale(1.0000,1.1000);transform-origin:0 11.67px;">-</div>
<div class="t" style="left:796.70px;top:712.73px;font-size:12.90px;color:#000;transform:scale(1.0000,1.1000);transform-origin:0 11.67px;">-</div>
<div class="t" style="left:846.76px;top:524.93px;font-size:12.90px;color:#000;font-weight:bold;transform:scale(1.0000,1.1000);transform-origin:0 11.67px;">263,210,000</div>
<div class="t" style="left:846.76px;top:541.93px;font-size:12.90px;color:#000;transform:scale(1.0000,1.1000);transform-origin:0 11.67px;">184,247,000</div>
<div class="t" style="left:853.94px;top:558.93px;font-size:12.90px;color:#000;transform:scale(1.0000,1.1000);transform-origin:0 11.67px;">78,963,000</div>
<div class="t" style="left:861.11px;top:626.93px;font-size:12.90px;color:#000;font-weight:bold;transform:scale(1.0000,1.1000);transform-origin:0 11.67px;">1,289,460</div>
<div class="t" style="left:861.11px;top:660.93px;font-size:12.90px;color:#000;font-style:italic;transform:scale(1.0000,1.1000);transform-origin:0 11.67px;">1,289,460</div>
<div class="t" style="left:846.76px;top:677.93px;font-size:12.90px;color:#000;transform:scale(1.0000,1.1000);transform-origin:0 11.67px;">128,946,000</div>
<div class="t" style="left:900.70px;top:695.73px;font-size:12.90px;color:#000;transform:scale(1.0000,1.1000);transform-origin:0 11.67px;">-</div>
<div class="t" style="left:900.70px;top:712.73px;font-size:12.90px;color:#000;transform:scale(1.0000,1.1000);transform-origin:0 11.67px;">-</div>
<div class="t" style="left:1004.70px;top:525.73px;font-size:12.90px;color:#000;transform:scale(1.0000,1.1000);transform-origin:0 11.67px;">-</div>
<div class="t" style="left:1004.70px;top:542.73px;font-size:12.90px;color:#000;transform:scale(1.0000,1.1000);transform-origin:0 11.67px;">-</div>
<div class="t" style="left:1004.70px;top:559.73px;font-size:12.90px;color:#000;transform:scale(1.0000,1.1000);transform-origin:0 11.67px;">-</div>
<div class="t" style="left:1108.70px;top:525.73px;font-size:12.90px;color:#000;transform:scale(1.0000,1.1000);transform-origin:0 11.67px;">-</div>
<div class="t" style="left:1108.70px;top:542.73px;font-size:12.90px;color:#000;transform:scale(1.0000,1.1000);transform-origin:0 11.67px;">-</div>
<div class="t" style="left:1108.70px;top:559.73px;font-size:12.90px;color:#000;transform:scale(1.0000,1.1000);transform-origin:0 11.67px;">-</div>
<div class="t" style="left:1212.70px;top:525.73px;font-size:12.90px;color:#000;transform:scale(1.0000,1.1000);transform-origin:0 11.67px;">-</div>
<div class="t" style="left:1212.70px;top:542.73px;font-size:12.90px;color:#000;transform:scale(1.0000,1.1000);transform-origin:0 11.67px;">-</div>
<div class="t" style="left:1212.70px;top:559.73px;font-size:12.90px;color:#000;transform:scale(1.0000,1.1000);transform-origin:0 11.67px;">-</div>
<div class="t" style="left:1315.70px;top:525.73px;font-size:12.90px;color:#000;transform:scale(1.0000,1.1000);transform-origin:0 11.67px;">-</div>
<div class="t" style="left:1315.70px;top:542.73px;font-size:12.90px;color:#000;transform:scale(1.0000,1.1000);transform-origin:0 11.67px;">-</div>
<div class="t" style="left:1315.70px;top:559.73px;font-size:12.90px;color:#000;transform:scale(1.0000,1.1000);transform-origin:0 11.67px;">-</div>
<div class="t" style="left:1416.70px;top:525.73px;font-size:12.90px;color:#000;transform:scale(1.0000,1.1000);transform-origin:0 11.67px;">-</div>
<div class="t" style="left:1416.70px;top:542.73px;font-size:12.90px;color:#000;transform:scale(1.0000,1.1000);transform-origin:0 11.67px;">-</div>
<div class="t" style="left:1416.70px;top:559.73px;font-size:12.90px;color:#000;transform:scale(1.0000,1.1000);transform-origin:0 11.67px;">-</div>
<div class="t" style="left:1517.70px;top:525.73px;font-size:12.90px;color:#000;transform:scale(1.0000,1.1000);transform-origin:0 11.67px;">-</div>
<div class="t" style="left:1517.70px;top:542.73px;font-size:12.90px;color:#000;transform:scale(1.0000,1.1000);transform-origin:0 11.67px;">-</div>
<div class="t" style="left:1517.70px;top:559.73px;font-size:12.90px;color:#000;transform:scale(1.0000,1.1000);transform-origin:0 11.67px;">-</div>
<div class="t" style="left:1618.70px;top:525.73px;font-size:12.90px;color:#000;transform:scale(1.0000,1.1000);transform-origin:0 11.67px;">-</div>
<div class="t" style="left:1618.70px;top:542.73px;font-size:12.90px;color:#000;transform:scale(1.0000,1.1000);transform-origin:0 11.67px;">-</div>
<div class="t" style="left:1618.70px;top:559.73px;font-size:12.90px;color:#000;transform:scale(1.0000,1.1000);transform-origin:0 11.67px;">-</div>
<div class="t" style="left:1719.70px;top:525.73px;font-size:12.90px;color:#000;transform:scale(1.0000,1.1000);transform-origin:0 11.67px;">-</div>
<div class="t" style="left:1719.70px;top:542.73px;font-size:12.90px;color:#000;transform:scale(1.0000,1.1000);transform-origin:0 11.67px;">-</div>
<div class="t" style="left:1719.70px;top:559.73px;font-size:12.90px;color:#000;transform:scale(1.0000,1.1000);transform-origin:0 11.67px;">-</div>
<div class="t" style="left:1820.70px;top:525.73px;font-size:12.90px;color:#000;transform:scale(1.0000,1.1000);transform-origin:0 11.67px;">-</div>
<div class="t" style="left:1820.70px;top:542.73px;font-size:12.90px;color:#000;transform:scale(1.0000,1.1000);transform-origin:0 11.67px;">-</div>
<div class="t" style="left:1820.70px;top:559.73px;font-size:12.90px;color:#000;transform:scale(1.0000,1.1000);transform-origin:0 11.67px;">-</div>
<div class="t" style="left:1919.20px;top:525.73px;font-size:12.90px;color:#000;transform:scale(1.0000,1.1000);transform-origin:0 11.67px;">-</div>
<div class="t" style="left:1919.20px;top:542.73px;font-size:12.90px;color:#000;transform:scale(1.0000,1.1000);transform-origin:0 11.67px;">-</div>
<div class="t" style="left:1919.20px;top:559.73px;font-size:12.90px;color:#000;transform:scale(1.0000,1.1000);transform-origin:0 11.67px;">-</div>
<div class="t" style="left:965.11px;top:626.93px;font-size:12.90px;color:#000;font-weight:bold;transform:scale(1.0000,1.1000);transform-origin:0 11.67px;">3,512,667</div>
<div class="t" style="left:965.11px;top:643.93px;font-size:12.90px;color:#000;font-style:italic;transform:scale(1.0000,1.1000);transform-origin:0 11.67px;">2,223,207</div>
<div class="t" style="left:965.11px;top:660.93px;font-size:12.90px;color:#000;font-style:italic;transform:scale(1.0000,1.1000);transform-origin:0 11.67px;">1,289,460</div>
<div class="t" style="left:950.76px;top:677.93px;font-size:12.90px;color:#000;transform:scale(1.0000,1.1000);transform-origin:0 11.67px;">126,722,793</div>
<div class="t" style="left:1000.47px;top:694.93px;font-size:12.90px;color:#000;transform:scale(1.0000,1.1000);transform-origin:0 11.67px;">(6.7)</div>
<div class="t" style="left:958.85px;top:711.93px;font-size:12.90px;color:#9c0006;transform:scale(1.0000,1.1000);transform-origin:0 11.67px;">Không</div>
<div class="t" style="left:1069.11px;top:626.93px;font-size:12.90px;color:#000;font-weight:bold;transform:scale(1.0000,1.1000);transform-origin:0 11.67px;">3,490,435</div>
<div class="t" style="left:1069.11px;top:643.93px;font-size:12.90px;color:#000;font-style:italic;transform:scale(1.0000,1.1000);transform-origin:0 11.67px;">2,223,207</div>
<div class="t" style="left:1069.11px;top:660.93px;font-size:12.90px;color:#000;font-style:italic;transform:scale(1.0000,1.1000);transform-origin:0 11.67px;">1,267,228</div>
<div class="t" style="left:1054.76px;top:677.93px;font-size:12.90px;color:#000;transform:scale(1.0000,1.1000);transform-origin:0 11.67px;">124,499,586</div>
<div class="t" style="left:1104.47px;top:694.93px;font-size:12.90px;color:#000;transform:scale(1.0000,1.1000);transform-origin:0 11.67px;">(2.0)</div>
<div class="t" style="left:1062.85px;top:711.93px;font-size:12.90px;color:#9c0006;transform:scale(1.0000,1.1000);transform-origin:0 11.67px;">Không</div>
<div class="t" style="left:1173.11px;top:626.93px;font-size:12.90px;color:#000;font-weight:bold;transform:scale(1.0000,1.1000);transform-origin:0 11.67px;">3,468,203</div>
<div class="t" style="left:1173.11px;top:643.93px;font-size:12.90px;color:#000;font-style:italic;transform:scale(1.0000,1.1000);transform-origin:0 11.67px;">2,223,207</div>
<div class="t" style="left:1173.11px;top:660.93px;font-size:12.90px;color:#000;font-style:italic;transform:scale(1.0000,1.1000);transform-origin:0 11.67px;">1,244,996</div>
<div class="t" style="left:1158.76px;top:677.93px;font-size:12.90px;color:#000;transform:scale(1.0000,1.1000);transform-origin:0 11.67px;">122,276,379</div>
<div class="t" style="left:1212.57px;top:694.93px;font-size:12.90px;color:#000;transform:scale(1.0000,1.1000);transform-origin:0 11.67px;">2.7</div>
<div class="t" style="left:1177.25px;top:711.93px;font-size:12.90px;color:#000;transform:scale(1.0000,1.1000);transform-origin:0 11.67px;">Có</div>
<div class="t" style="left:1276.11px;top:626.93px;font-size:12.90px;color:#000;font-weight:bold;transform:scale(1.0000,1.1000);transform-origin:0 11.67px;">3,445,971</div>
<div class="t" style="left:1276.11px;top:643.93px;font-size:12.90px;color:#000;font-style:italic;transform:scale(1.0000,1.1000);transform-origin:0 11.67px;">2,223,207</div>
<div class="t" style="left:1276.11px;top:660.93px;font-size:12.90px;color:#000;font-style:italic;transform:scale(1.0000,1.1000);transform-origin:0 11.67px;">1,222,764</div>
<div class="t" style="left:1261.76px;top:677.93px;font-size:12.90px;color:#000;transform:scale(1.0000,1.1000);transform-origin:0 11.67px;">120,053,172</div>
<div class="t" style="left:1315.57px;top:694.93px;font-size:12.90px;color:#000;transform:scale(1.0000,1.1000);transform-origin:0 11.67px;">7.4</div>
<div class="t" style="left:1280.75px;top:711.93px;font-size:12.90px;color:#000;transform:scale(1.0000,1.1000);transform-origin:0 11.67px;">Có</div>
<div class="t" style="left:1377.11px;top:626.93px;font-size:12.90px;color:#000;font-weight:bold;transform:scale(1.0000,1.1000);transform-origin:0 11.67px;">3,423,739</div>
<div class="t" style="left:1377.11px;top:643.93px;font-size:12.90px;color:#000;font-style:italic;transform:scale(1.0000,1.1000);transform-origin:0 11.67px;">2,223,207</div>
<div class="t" style="left:1377.11px;top:660.93px;font-size:12.90px;color:#000;font-style:italic;transform:scale(1.0000,1.1000);transform-origin:0 11.67px;">1,200,532</div>
<div class="t" style="left:1363.72px;top:677.93px;font-size:12.90px;color:#000;transform:scale(1.0000,1.1000);transform-origin:0 11.67px;">117,829,966</div>
<div class="t" style="left:1409.39px;top:694.93px;font-size:12.90px;color:#000;transform:scale(1.0000,1.1000);transform-origin:0 11.67px;">12.2</div>
<div class="t" style="left:1382.75px;top:711.93px;font-size:12.90px;color:#000;transform:scale(1.0000,1.1000);transform-origin:0 11.67px;">Có</div>
<div class="t" style="left:1478.11px;top:626.93px;font-size:12.90px;color:#000;font-weight:bold;transform:scale(1.0000,1.1000);transform-origin:0 11.67px;">3,401,507</div>
<div class="t" style="left:1478.11px;top:643.93px;font-size:12.90px;color:#000;font-style:italic;transform:scale(1.0000,1.1000);transform-origin:0 11.67px;">2,223,207</div>
<div class="t" style="left:1478.11px;top:660.93px;font-size:12.90px;color:#000;font-style:italic;transform:scale(1.0000,1.1000);transform-origin:0 11.67px;">1,178,300</div>
<div class="t" style="left:1464.72px;top:677.93px;font-size:12.90px;color:#000;transform:scale(1.0000,1.1000);transform-origin:0 11.67px;">115,606,759</div>
<div class="t" style="left:1510.39px;top:694.93px;font-size:12.90px;color:#000;transform:scale(1.0000,1.1000);transform-origin:0 11.67px;">17.1</div>
<div class="t" style="left:1483.75px;top:711.93px;font-size:12.90px;color:#000;transform:scale(1.0000,1.1000);transform-origin:0 11.67px;">Có</div>
<div class="t" style="left:1579.11px;top:626.93px;font-size:12.90px;color:#000;font-weight:bold;transform:scale(1.0000,1.1000);transform-origin:0 11.67px;">3,379,274</div>
<div class="t" style="left:1579.11px;top:643.93px;font-size:12.90px;color:#000;font-style:italic;transform:scale(1.0000,1.1000);transform-origin:0 11.67px;">2,223,207</div>
<div class="t" style="left:1579.11px;top:660.93px;font-size:12.90px;color:#000;font-style:italic;transform:scale(1.0000,1.1000);transform-origin:0 11.67px;">1,156,068</div>
<div class="t" style="left:1565.72px;top:677.93px;font-size:12.90px;color:#000;transform:scale(1.0000,1.1000);transform-origin:0 11.67px;">113,383,552</div>
<div class="t" style="left:1611.39px;top:694.93px;font-size:12.90px;color:#000;transform:scale(1.0000,1.1000);transform-origin:0 11.67px;">17.2</div>
<div class="t" style="left:1584.75px;top:711.93px;font-size:12.90px;color:#000;transform:scale(1.0000,1.1000);transform-origin:0 11.67px;">Có</div>
<div class="t" style="left:1680.11px;top:626.93px;font-size:12.90px;color:#000;font-weight:bold;transform:scale(1.0000,1.1000);transform-origin:0 11.67px;">3,357,042</div>
<div class="t" style="left:1680.11px;top:643.93px;font-size:12.90px;color:#000;font-style:italic;transform:scale(1.0000,1.1000);transform-origin:0 11.67px;">2,223,207</div>
<div class="t" style="left:1680.11px;top:660.93px;font-size:12.90px;color:#000;font-style:italic;transform:scale(1.0000,1.1000);transform-origin:0 11.67px;">1,133,836</div>
<div class="t" style="left:1667.68px;top:677.93px;font-size:12.90px;color:#000;transform:scale(1.0000,1.1000);transform-origin:0 11.67px;">111,160,345</div>
<div class="t" style="left:1712.39px;top:694.93px;font-size:12.90px;color:#000;transform:scale(1.0000,1.1000);transform-origin:0 11.67px;">17.4</div>
<div class="t" style="left:1685.75px;top:711.93px;font-size:12.90px;color:#000;transform:scale(1.0000,1.1000);transform-origin:0 11.67px;">Có</div>
<div class="t" style="left:1781.11px;top:626.93px;font-size:12.90px;color:#000;font-weight:bold;transform:scale(1.0000,1.1000);transform-origin:0 11.67px;">3,334,810</div>
<div class="t" style="left:1781.11px;top:643.93px;font-size:12.90px;color:#000;font-style:italic;transform:scale(1.0000,1.1000);transform-origin:0 11.67px;">2,223,207</div>
<div class="t" style="left:1783.02px;top:660.93px;font-size:12.90px;color:#000;font-style:italic;transform:scale(1.0000,1.1000);transform-origin:0 11.67px;">1,111,603</div>
<div class="t" style="left:1766.76px;top:677.93px;font-size:12.90px;color:#000;transform:scale(1.0000,1.1000);transform-origin:0 11.67px;">108,937,138</div>
<div class="t" style="left:1813.39px;top:694.93px;font-size:12.90px;color:#000;transform:scale(1.0000,1.1000);transform-origin:0 11.67px;">17.5</div>
<div class="t" style="left:1786.75px;top:711.93px;font-size:12.90px;color:#000;transform:scale(1.0000,1.1000);transform-origin:0 11.67px;">Có</div>
<div class="t" style="left:1879.61px;top:626.93px;font-size:12.90px;color:#000;font-weight:bold;transform:scale(1.0000,1.1000);transform-origin:0 11.67px;">3,312,578</div>
<div class="t" style="left:1879.61px;top:643.93px;font-size:12.90px;color:#000;font-style:italic;transform:scale(1.0000,1.1000);transform-origin:0 11.67px;">2,223,207</div>
<div class="t" style="left:1879.61px;top:660.93px;font-size:12.90px;color:#000;font-style:italic;transform:scale(1.0000,1.1000);transform-origin:0 11.67px;">1,089,371</div>
<div class="t" style="left:1865.26px;top:677.93px;font-size:12.90px;color:#000;transform:scale(1.0000,1.1000);transform-origin:0 11.67px;">106,714,931</div>
<div class="t" style="left:1911.89px;top:694.93px;font-size:12.90px;color:#000;transform:scale(1.0000,1.1000);transform-origin:0 11.67px;">17.7</div>
<div class="t" style="left:1886.50px;top:711.93px;font-size:12.90px;color:#000;transform:scale(1.0000,1.1000);transform-origin:0 11.67px;">Có</div>
<div class="t" style="left:28.00px;top:745.93px;font-size:12.90px;color:#000;font-weight:bold;transform:scale(1.0000,1.1000);transform-origin:0 11.67px;">KẾT QUẢ KINH DOANH</div>
<div class="t" style="left:28.00px;top:762.93px;font-size:12.90px;color:#000;font-weight:bold;transform:scale(1.0250,1.1000);transform-origin:0 11.67px;">Doanh thu</div>
<div class="t" style="left:28.00px;top:779.93px;font-size:12.90px;color:#000;transform:scale(1.0000,1.1000);transform-origin:0 11.67px;">Số học viên 1 tháng</div>
<div class="t" style="left:28.00px;top:796.93px;font-size:12.90px;color:#000;font-style:italic;transform:scale(1.0000,1.1000);transform-origin:0 11.67px;">      Công suất</div>
<div class="t" style="left:28.00px;top:813.93px;font-size:12.90px;color:#000;transform:scale(1.0000,1.1000);transform-origin:0 11.67px;">Doanh thu 1 học viên</div>
<div class="t" style="left:28.00px;top:830.93px;font-size:12.90px;color:#000;font-weight:bold;transform:scale(1.0250,1.1000);transform-origin:0 11.67px;">Chi phí</div>
<div class="t" style="left:28.00px;top:847.93px;font-size:12.90px;color:#000;font-weight:bold;font-style:italic;transform:scale(1.0250,1.1000);transform-origin:0 11.67px;">Định phí (Chi phí cố định)</div>
<div class="t" style="left:28.00px;top:864.93px;font-size:12.90px;color:#000;transform:scale(1.0000,1.1000);transform-origin:0 11.67px;">Thuê mặt bằng</div>
<div class="t" style="left:28.00px;top:881.93px;font-size:12.90px;color:#000;transform:scale(1.0000,1.1000);transform-origin:0 11.67px;">Khấu hao</div>
<div class="t" style="left:28.00px;top:898.93px;font-size:12.90px;color:#000;transform:scale(1.0000,1.1000);transform-origin:0 11.67px;">Lãi vay</div>
<div class="t" style="left:28.00px;top:915.93px;font-size:12.90px;color:#000;transform:scale(1.0000,1.1000);transform-origin:0 11.67px;">Lương cố định</div>
<div class="t" style="left:28.00px;top:932.93px;font-size:12.90px;color:#000;transform:scale(1.0000,1.1000);transform-origin:0 11.67px;">Wifi</div>
<div class="t" style="left:28.00px;top:949.93px;font-size:12.90px;color:#000;transform:scale(1.0000,1.1000);transform-origin:0 11.67px;">Khác</div>
<div class="t" style="left:402.98px;top:779.93px;font-size:12.90px;color:#000;transform:scale(1.0000,1.1000);transform-origin:0 11.67px;">485</div>
<div class="t" style="left:377.87px;top:813.93px;font-size:12.90px;color:#000;transform:scale(1.0000,1.1000);transform-origin:0 11.67px;">900,000</div>
<div class="t" style="left:359.94px;top:864.93px;font-size:12.90px;color:#000;transform:scale(1.0000,1.1000);transform-origin:0 11.67px;">20,000,000</div>
<div class="t" style="left:421.83px;top:881.93px;font-size:12.90px;color:#000;transform:scale(1.0000,1.1000);transform-origin:0 11.67px;">5</div>
<div class="t" style="left:359.94px;top:915.93px;font-size:12.90px;color:#000;transform:scale(1.0000,1.1000);transform-origin:0 11.67px;">51,500,000</div>
<div class="t" style="left:377.87px;top:932.93px;font-size:12.90px;color:#000;transform:scale(1.0000,1.1000);transform-origin:0 11.67px;">950,000</div>
<div class="t" style="left:434.00px;top:779.93px;font-size:12.90px;color:#000;transform:scale(1.0000,1.1000);transform-origin:0 11.67px;">học viên</div>
<div class="t" style="left:434.00px;top:813.93px;font-size:12.90px;color:#000;transform:scale(1.0000,1.1000);transform-origin:0 11.67px;">đ/học viên/tháng</div>
<div class="t" style="left:434.00px;top:864.93px;font-size:12.90px;color:#000;transform:scale(1.0000,1.1000);transform-origin:0 11.67px;">/tháng</div>
<div class="t" style="left:434.00px;top:881.93px;font-size:12.90px;color:#000;transform:scale(1.0000,1.1000);transform-origin:0 11.67px;">năm</div>
<div class="t" style="left:434.00px;top:915.93px;font-size:12.90px;color:#000;transform:scale(1.0000,1.1000);transform-origin:0 11.67px;">đ/học viên</div>
<div class="t" style="left:434.00px;top:932.93px;font-size:12.90px;color:#000;transform:scale(1.0000,1.1000);transform-origin:0 11.67px;">/tháng</div>
<div class="t" style="left:434.00px;top:949.93px;font-size:12.90px;color:#000;transform:scale(1.0000,1.1000);transform-origin:0 11.67px;">/tháng</div>
<div class="t" style="left:543.83px;top:762.93px;font-size:12.90px;color:#000;font-weight:bold;transform:scale(1.0000,1.1000);transform-origin:0 11.67px;">21,784,166,169</div>
<div class="t" style="left:543.83px;top:830.93px;font-size:12.90px;color:#000;font-weight:bold;transform:scale(1.0000,1.1000);transform-origin:0 11.67px;">18,736,940,957</div>
<div class="t" style="left:551.71px;top:847.93px;font-size:12.90px;color:#000;font-weight:bold;transform:scale(1.0000,1.1000);transform-origin:0 11.67px;">5,114,345,192</div>
<div class="t" style="left:950.76px;top:762.93px;font-size:12.90px;color:#000;font-weight:bold;transform:scale(1.0000,1.1000);transform-origin:0 11.67px;">130,846,154</div>
<div class="t" style="left:1000.98px;top:779.93px;font-size:12.90px;color:#000;transform:scale(1.0000,1.1000);transform-origin:0 11.67px;">145</div>
<div class="t" style="left:998.18px;top:796.93px;font-size:12.90px;color:#9c0006;font-style:italic;transform:scale(1.0000,1.1000);transform-origin:0 11.67px;">30%</div>
<div class="t" style="left:975.87px;top:813.93px;font-size:12.90px;color:#000;transform:scale(1.0000,1.1000);transform-origin:0 11.67px;">900,000</div>
<div class="t" style="left:950.76px;top:830.93px;font-size:12.90px;color:#000;font-weight:bold;transform:scale(1.0000,1.1000);transform-origin:0 11.67px;">162,756,794</div>
<div class="t" style="left:957.94px;top:847.93px;font-size:12.90px;color:#000;font-weight:bold;font-style:italic;transform:scale(1.0000,1.1000);transform-origin:0 11.67px;">80,932,948</div>
<div class="t" style="left:957.94px;top:864.93px;font-size:12.90px;color:#000;transform:scale(1.0000,1.1000);transform-origin:0 11.67px;">20,000,000</div>
<div class="t" style="left:965.11px;top:881.93px;font-size:12.90px;color:#000;transform:scale(1.0000,1.1000);transform-origin:0 11.67px;">7,193,488</div>
<div class="t" style="left:965.11px;top:898.93px;font-size:12.90px;color:#000;transform:scale(1.0000,1.1000);transform-origin:0 11.67px;">1,289,460</div>
<div class="t" style="left:957.94px;top:915.93px;font-size:12.90px;color:#000;transform:scale(1.0000,1.1000);transform-origin:0 11.67px;">51,500,000</div>
<div class="t" style="left:975.87px;top:932.93px;font-size:12.90px;color:#000;transform:scale(1.0000,1.1000);transform-origin:0 11.67px;">950,000</div>
<div class="t" style="left:1054.76px;top:762.93px;font-size:12.90px;color:#000;font-weight:bold;transform:scale(1.0000,1.1000);transform-origin:0 11.67px;">174,461,538</div>
<div class="t" style="left:1104.98px;top:779.93px;font-size:12.90px;color:#000;transform:scale(1.0000,1.1000);transform-origin:0 11.67px;">194</div>
<div class="t" style="left:1102.18px;top:796.93px;font-size:12.90px;color:#9c0006;font-style:italic;transform:scale(1.0000,1.1000);transform-origin:0 11.67px;">40%</div>
<div class="t" style="left:1079.87px;top:813.93px;font-size:12.90px;color:#000;transform:scale(1.0000,1.1000);transform-origin:0 11.67px;">900,000</div>
<div class="t" style="left:1054.76px;top:830.93px;font-size:12.90px;color:#000;font-weight:bold;transform:scale(1.0000,1.1000);transform-origin:0 11.67px;">190,009,178</div>
<div class="t" style="left:1061.94px;top:847.93px;font-size:12.90px;color:#000;font-weight:bold;font-style:italic;transform:scale(1.0000,1.1000);transform-origin:0 11.67px;">80,910,716</div>
<div class="t" style="left:1061.94px;top:864.93px;font-size:12.90px;color:#000;transform:scale(1.0000,1.1000);transform-origin:0 11.67px;">20,000,000</div>
<div class="t" style="left:1069.11px;top:881.93px;font-size:12.90px;color:#000;transform:scale(1.0000,1.1000);transform-origin:0 11.67px;">7,193,488</div>
<div class="t" style="left:1069.11px;top:898.93px;font-size:12.90px;color:#000;transform:scale(1.0000,1.1000);transform-origin:0 11.67px;">1,267,228</div>
<div class="t" style="left:1061.94px;top:915.93px;font-size:12.90px;color:#000;transform:scale(1.0000,1.1000);transform-origin:0 11.67px;">51,500,000</div>
<div class="t" style="left:1079.87px;top:932.93px;font-size:12.90px;color:#000;transform:scale(1.0000,1.1000);transform-origin:0 11.67px;">950,000</div>
<div class="t" style="left:1158.76px;top:762.93px;font-size:12.90px;color:#000;font-weight:bold;transform:scale(1.0000,1.1000);transform-origin:0 11.67px;">218,076,923</div>
<div class="t" style="left:1208.98px;top:779.93px;font-size:12.90px;color:#000;transform:scale(1.0000,1.1000);transform-origin:0 11.67px;">242</div>
<div class="t" style="left:1206.18px;top:796.93px;font-size:12.90px;color:#9c0006;font-style:italic;transform:scale(1.0000,1.1000);transform-origin:0 11.67px;">50%</div>
<div class="t" style="left:1183.87px;top:813.93px;font-size:12.90px;color:#000;transform:scale(1.0000,1.1000);transform-origin:0 11.67px;">900,000</div>
<div class="t" style="left:1158.76px;top:830.93px;font-size:12.90px;color:#000;font-weight:bold;transform:scale(1.0000,1.1000);transform-origin:0 11.67px;">217,261,561</div>
<div class="t" style="left:1165.94px;top:847.93px;font-size:12.90px;color:#000;font-weight:bold;font-style:italic;transform:scale(1.0000,1.1000);transform-origin:0 11.67px;">80,888,484</div>
<div class="t" style="left:1165.94px;top:864.93px;font-size:12.90px;color:#000;transform:scale(1.0000,1.1000);transform-origin:0 11.67px;">20,000,000</div>
<div class="t" style="left:1173.11px;top:881.93px;font-size:12.90px;color:#000;transform:scale(1.0000,1.1000);transform-origin:0 11.67px;">7,193,488</div>
<div class="t" style="left:1173.11px;top:898.93px;font-size:12.90px;color:#000;transform:scale(1.0000,1.1000);transform-origin:0 11.67px;">1,244,996</div>
<div class="t" style="left:1165.94px;top:915.93px;font-size:12.90px;color:#000;transform:scale(1.0000,1.1000);transform-origin:0 11.67px;">51,500,000</div>
<div class="t" style="left:1183.87px;top:932.93px;font-size:12.90px;color:#000;transform:scale(1.0000,1.1000);transform-origin:0 11.67px;">950,000</div>
<div class="t" style="left:1261.76px;top:762.93px;font-size:12.90px;color:#000;font-weight:bold;transform:scale(1.0000,1.1000);transform-origin:0 11.67px;">261,692,308</div>
<div class="t" style="left:1311.98px;top:779.93px;font-size:12.90px;color:#000;transform:scale(1.0000,1.1000);transform-origin:0 11.67px;">291</div>
<div class="t" style="left:1309.18px;top:796.93px;font-size:12.90px;color:#9c0006;font-style:italic;transform:scale(1.0000,1.1000);transform-origin:0 11.67px;">60%</div>
<div class="t" style="left:1286.87px;top:813.93px;font-size:12.90px;color:#000;transform:scale(1.0000,1.1000);transform-origin:0 11.67px;">900,000</div>
<div class="t" style="left:1261.76px;top:830.93px;font-size:12.90px;color:#000;font-weight:bold;transform:scale(1.0000,1.1000);transform-origin:0 11.67px;">244,513,944</div>
<div class="t" style="left:1268.94px;top:847.93px;font-size:12.90px;color:#000;font-weight:bold;font-style:italic;transform:scale(1.0000,1.1000);transform-origin:0 11.67px;">80,866,252</div>
<div class="t" style="left:1268.94px;top:864.93px;font-size:12.90px;color:#000;transform:scale(1.0000,1.1000);transform-origin:0 11.67px;">20,000,000</div>
<div class="t" style="left:1276.11px;top:881.93px;font-size:12.90px;color:#000;transform:scale(1.0000,1.1000);transform-origin:0 11.67px;">7,193,488</div>
<div class="t" style="left:1276.11px;top:898.93px;font-size:12.90px;color:#000;transform:scale(1.0000,1.1000);transform-origin:0 11.67px;">1,222,764</div>
<div class="t" style="left:1268.94px;top:915.93px;font-size:12.90px;color:#000;transform:scale(1.0000,1.1000);transform-origin:0 11.67px;">51,500,000</div>
<div class="t" style="left:1286.87px;top:932.93px;font-size:12.90px;color:#000;transform:scale(1.0000,1.1000);transform-origin:0 11.67px;">950,000</div>
<div class="t" style="left:1362.76px;top:762.93px;font-size:12.90px;color:#000;font-weight:bold;transform:scale(1.0000,1.1000);transform-origin:0 11.67px;">305,307,692</div>
<div class="t" style="left:1412.98px;top:779.93px;font-size:12.90px;color:#000;transform:scale(1.0000,1.1000);transform-origin:0 11.67px;">339</div>
<div class="t" style="left:1410.18px;top:796.93px;font-size:12.90px;color:#000;font-style:italic;transform:scale(1.0000,1.1000);transform-origin:0 11.67px;">70%</div>
<div class="t" style="left:1387.87px;top:813.93px;font-size:12.90px;color:#000;transform:scale(1.0000,1.1000);transform-origin:0 11.67px;">900,000</div>
<div class="t" style="left:1362.76px;top:830.93px;font-size:12.90px;color:#000;font-weight:bold;transform:scale(1.0000,1.1000);transform-origin:0 11.67px;">271,766,328</div>
<div class="t" style="left:1369.94px;top:847.93px;font-size:12.90px;color:#000;font-weight:bold;font-style:italic;transform:scale(1.0000,1.1000);transform-origin:0 11.67px;">80,844,020</div>
<div class="t" style="left:1369.94px;top:864.93px;font-size:12.90px;color:#000;transform:scale(1.0000,1.1000);transform-origin:0 11.67px;">20,000,000</div>
<div class="t" style="left:1377.11px;top:881.93px;font-size:12.90px;color:#000;transform:scale(1.0000,1.1000);transform-origin:0 11.67px;">7,193,488</div>
<div class="t" style="left:1377.11px;top:898.93px;font-size:12.90px;color:#000;transform:scale(1.0000,1.1000);transform-origin:0 11.67px;">1,200,532</div>
<div class="t" style="left:1369.94px;top:915.93px;font-size:12.90px;color:#000;transform:scale(1.0000,1.1000);transform-origin:0 11.67px;">51,500,000</div>
<div class="t" style="left:1387.87px;top:932.93px;font-size:12.90px;color:#000;transform:scale(1.0000,1.1000);transform-origin:0 11.67px;">950,000</div>
<div class="t" style="left:1463.76px;top:762.93px;font-size:12.90px;color:#000;font-weight:bold;transform:scale(1.0000,1.1000);transform-origin:0 11.67px;">348,923,077</div>
<div class="t" style="left:1513.98px;top:779.93px;font-size:12.90px;color:#000;transform:scale(1.0000,1.1000);transform-origin:0 11.67px;">388</div>
<div class="t" style="left:1511.18px;top:796.93px;font-size:12.90px;color:#000;font-style:italic;transform:scale(1.0000,1.1000);transform-origin:0 11.67px;">80%</div>
<div class="t" style="left:1488.87px;top:813.93px;font-size:12.90px;color:#000;transform:scale(1.0000,1.1000);transform-origin:0 11.67px;">900,000</div>
<div class="t" style="left:1464.47px;top:830.93px;font-size:12.90px;color:#000;font-weight:bold;transform:scale(1.0000,1.1000);transform-origin:0 11.67px;">299,018,711</div>
<div class="t" style="left:1470.94px;top:847.93px;font-size:12.90px;color:#000;font-weight:bold;font-style:italic;transform:scale(1.0000,1.1000);transform-origin:0 11.67px;">80,821,788</div>
<div class="t" style="left:1470.94px;top:864.93px;font-size:12.90px;color:#000;transform:scale(1.0000,1.1000);transform-origin:0 11.67px;">20,000,000</div>
<div class="t" style="left:1478.11px;top:881.93px;font-size:12.90px;color:#000;transform:scale(1.0000,1.1000);transform-origin:0 11.67px;">7,193,488</div>
<div class="t" style="left:1478.11px;top:898.93px;font-size:12.90px;color:#000;transform:scale(1.0000,1.1000);transform-origin:0 11.67px;">1,178,300</div>
<div class="t" style="left:1470.94px;top:915.93px;font-size:12.90px;color:#000;transform:scale(1.0000,1.1000);transform-origin:0 11.67px;">51,500,000</div>
<div class="t" style="left:1488.87px;top:932.93px;font-size:12.90px;color:#000;transform:scale(1.0000,1.1000);transform-origin:0 11.67px;">950,000</div>
<div class="t" style="left:1564.76px;top:762.93px;font-size:12.90px;color:#000;font-weight:bold;transform:scale(1.0000,1.1000);transform-origin:0 11.67px;">348,923,077</div>
<div class="t" style="left:1614.98px;top:779.93px;font-size:12.90px;color:#000;transform:scale(1.0000,1.1000);transform-origin:0 11.67px;">388</div>
<div class="t" style="left:1612.18px;top:796.93px;font-size:12.90px;color:#000;font-style:italic;transform:scale(1.0000,1.1000);transform-origin:0 11.67px;">80%</div>
<div class="t" style="left:1589.87px;top:813.93px;font-size:12.90px;color:#000;transform:scale(1.0000,1.1000);transform-origin:0 11.67px;">900,000</div>
<div class="t" style="left:1564.76px;top:830.93px;font-size:12.90px;color:#000;font-weight:bold;transform:scale(1.0000,1.1000);transform-origin:0 11.67px;">298,996,479</div>
<div class="t" style="left:1571.94px;top:847.93px;font-size:12.90px;color:#000;font-weight:bold;font-style:italic;transform:scale(1.0000,1.1000);transform-origin:0 11.67px;">80,799,556</div>
<div class="t" style="left:1571.94px;top:864.93px;font-size:12.90px;color:#000;transform:scale(1.0000,1.1000);transform-origin:0 11.67px;">20,000,000</div>
<div class="t" style="left:1579.11px;top:881.93px;font-size:12.90px;color:#000;transform:scale(1.0000,1.1000);transform-origin:0 11.67px;">7,193,488</div>
<div class="t" style="left:1579.11px;top:898.93px;font-size:12.90px;color:#000;transform:scale(1.0000,1.1000);transform-origin:0 11.67px;">1,156,068</div>
<div class="t" style="left:1571.94px;top:915.93px;font-size:12.90px;color:#000;transform:scale(1.0000,1.1000);transform-origin:0 11.67px;">51,500,000</div>
<div class="t" style="left:1589.87px;top:932.93px;font-size:12.90px;color:#000;transform:scale(1.0000,1.1000);transform-origin:0 11.67px;">950,000</div>
<div class="t" style="left:1665.76px;top:762.93px;font-size:12.90px;color:#000;font-weight:bold;transform:scale(1.0000,1.1000);transform-origin:0 11.67px;">348,923,077</div>
<div class="t" style="left:1715.98px;top:779.93px;font-size:12.90px;color:#000;transform:scale(1.0000,1.1000);transform-origin:0 11.67px;">388</div>
<div class="t" style="left:1713.18px;top:796.93px;font-size:12.90px;color:#000;font-style:italic;transform:scale(1.0000,1.1000);transform-origin:0 11.67px;">80%</div>
<div class="t" style="left:1690.87px;top:813.93px;font-size:12.90px;color:#000;transform:scale(1.0000,1.1000);transform-origin:0 11.67px;">900,000</div>
<div class="t" style="left:1665.76px;top:830.93px;font-size:12.90px;color:#000;font-weight:bold;transform:scale(1.0000,1.1000);transform-origin:0 11.67px;">298,974,247</div>
<div class="t" style="left:1672.94px;top:847.93px;font-size:12.90px;color:#000;font-weight:bold;font-style:italic;transform:scale(1.0000,1.1000);transform-origin:0 11.67px;">80,777,324</div>
<div class="t" style="left:1672.94px;top:864.93px;font-size:12.90px;color:#000;transform:scale(1.0000,1.1000);transform-origin:0 11.67px;">20,000,000</div>
<div class="t" style="left:1680.11px;top:881.93px;font-size:12.90px;color:#000;transform:scale(1.0000,1.1000);transform-origin:0 11.67px;">7,193,488</div>
<div class="t" style="left:1680.11px;top:898.93px;font-size:12.90px;color:#000;transform:scale(1.0000,1.1000);transform-origin:0 11.67px;">1,133,836</div>
<div class="t" style="left:1672.94px;top:915.93px;font-size:12.90px;color:#000;transform:scale(1.0000,1.1000);transform-origin:0 11.67px;">51,500,000</div>
<div class="t" style="left:1690.87px;top:932.93px;font-size:12.90px;color:#000;transform:scale(1.0000,1.1000);transform-origin:0 11.67px;">950,000</div>
<div class="t" style="left:1766.76px;top:762.93px;font-size:12.90px;color:#000;font-weight:bold;transform:scale(1.0000,1.1000);transform-origin:0 11.67px;">348,923,077</div>
<div class="t" style="left:1816.98px;top:779.93px;font-size:12.90px;color:#000;transform:scale(1.0000,1.1000);transform-origin:0 11.67px;">388</div>
<div class="t" style="left:1814.18px;top:796.93px;font-size:12.90px;color:#000;font-style:italic;transform:scale(1.0000,1.1000);transform-origin:0 11.67px;">80%</div>
<div class="t" style="left:1791.87px;top:813.93px;font-size:12.90px;color:#000;transform:scale(1.0000,1.1000);transform-origin:0 11.67px;">900,000</div>
<div class="t" style="left:1766.76px;top:830.93px;font-size:12.90px;color:#000;font-weight:bold;transform:scale(1.0000,1.1000);transform-origin:0 11.67px;">298,952,015</div>
<div class="t" style="left:1773.94px;top:847.93px;font-size:12.90px;color:#000;font-weight:bold;font-style:italic;transform:scale(1.0000,1.1000);transform-origin:0 11.67px;">80,755,092</div>
<div class="t" style="left:1773.94px;top:864.93px;font-size:12.90px;color:#000;transform:scale(1.0000,1.1000);transform-origin:0 11.67px;">20,000,000</div>
<div class="t" style="left:1781.11px;top:881.93px;font-size:12.90px;color:#000;transform:scale(1.0000,1.1000);transform-origin:0 11.67px;">7,193,488</div>
<div class="t" style="left:1783.02px;top:898.93px;font-size:12.90px;color:#000;transform:scale(1.0000,1.1000);transform-origin:0 11.67px;">1,111,603</div>
<div class="t" style="left:1773.94px;top:915.93px;font-size:12.90px;color:#000;transform:scale(1.0000,1.1000);transform-origin:0 11.67px;">51,500,000</div>
<div class="t" style="left:1791.87px;top:932.93px;font-size:12.90px;color:#000;transform:scale(1.0000,1.1000);transform-origin:0 11.67px;">950,000</div>
<div class="t" style="left:1865.26px;top:762.93px;font-size:12.90px;color:#000;font-weight:bold;transform:scale(1.0000,1.1000);transform-origin:0 11.67px;">348,923,077</div>
<div class="t" style="left:1915.48px;top:779.93px;font-size:12.90px;color:#000;transform:scale(1.0000,1.1000);transform-origin:0 11.67px;">388</div>
<div class="t" style="left:1912.68px;top:796.93px;font-size:12.90px;color:#000;font-style:italic;transform:scale(1.0000,1.1000);transform-origin:0 11.67px;">80%</div>
<div class="t" style="left:1890.37px;top:813.93px;font-size:12.90px;color:#000;transform:scale(1.0000,1.1000);transform-origin:0 11.67px;">900,000</div>
<div class="t" style="left:1865.26px;top:830.93px;font-size:12.90px;color:#000;font-weight:bold;transform:scale(1.0000,1.1000);transform-origin:0 11.67px;">298,929,783</div>
<div class="t" style="left:1872.44px;top:847.93px;font-size:12.90px;color:#000;font-weight:bold;font-style:italic;transform:scale(1.0000,1.1000);transform-origin:0 11.67px;">80,732,860</div>
<div class="t" style="left:1872.44px;top:864.93px;font-size:12.90px;color:#000;transform:scale(1.0000,1.1000);transform-origin:0 11.67px;">20,000,000</div>
<div class="t" style="left:1879.61px;top:881.93px;font-size:12.90px;color:#000;transform:scale(1.0000,1.1000);transform-origin:0 11.67px;">7,193,488</div>
<div class="t" style="left:1879.61px;top:898.93px;font-size:12.90px;color:#000;transform:scale(1.0000,1.1000);transform-origin:0 11.67px;">1,089,371</div>
<div class="t" style="left:1872.44px;top:915.93px;font-size:12.90px;color:#000;transform:scale(1.0000,1.1000);transform-origin:0 11.67px;">51,500,000</div>
<div class="t" style="left:1890.37px;top:932.93px;font-size:12.90px;color:#000;transform:scale(1.0000,1.1000);transform-origin:0 11.67px;">950,000</div>
<div class="r" style="left:1889px;top:285px;width:1px;height:668px;background:#a0a0a0;"></div>
</div>
<div class="r" style="left:0px;top:269px;width:1889px;height:16px;background:#e6e6e6;"></div>
<div class="r" style="left:0px;top:285px;width:25px;height:668px;background:#e6e6e6;"></div>
<svg style="left:12px;top:272px" width="12" height="11"><path d="M10 1.5 V10 H1.5 Z" fill="#b4b4b4"/></svg>
<div class="r" style="left:330px;top:269px;width:101px;height:16px;background:#d2d2d2;"></div>
<div class="r" style="left:0px;top:285px;width:24px;height:33px;background:#d2d2d2;"></div>
<div class="r" style="left:25px;top:269px;width:1px;height:16px;background:#c6c6c6;"></div>
<div class="t" style="left:173.66px;top:270.74px;font-size:13.00px;color:#222;transform:scale(1.0000,1.0700);transform-origin:0 11.77px;">A</div>
<div class="r" style="left:330px;top:269px;width:1px;height:16px;background:#c6c6c6;"></div>
<div class="t" style="left:376.66px;top:270.74px;font-size:13.00px;color:#1f6b40;transform:scale(1.0000,1.0700);transform-origin:0 11.77px;">B</div>
<div class="r" style="left:431px;top:269px;width:1px;height:16px;background:#c6c6c6;"></div>
<div class="t" style="left:475.31px;top:270.74px;font-size:13.00px;color:#222;transform:scale(1.0000,1.0700);transform-origin:0 11.77px;">C</div>
<div class="r" style="left:528px;top:269px;width:1px;height:16px;background:#c6c6c6;"></div>
<div class="t" style="left:579.81px;top:270.74px;font-size:13.00px;color:#222;transform:scale(1.0000,1.0700);transform-origin:0 11.77px;">D</div>
<div class="r" style="left:640px;top:269px;width:1px;height:16px;background:#c6c6c6;"></div>
<div class="t" style="left:677.66px;top:270.74px;font-size:13.00px;color:#222;transform:scale(1.0000,1.0700);transform-origin:0 11.77px;">E</div>
<div class="r" style="left:723px;top:269px;width:1px;height:16px;background:#c6c6c6;"></div>
<div class="t" style="left:768.53px;top:270.74px;font-size:13.00px;color:#222;transform:scale(1.0000,1.0700);transform-origin:0 11.77px;">F</div>
<div class="r" style="left:821px;top:269px;width:1px;height:16px;background:#c6c6c6;"></div>
<div class="t" style="left:868.44px;top:270.74px;font-size:13.00px;color:#222;transform:scale(1.0000,1.0700);transform-origin:0 11.77px;">G</div>
<div class="r" style="left:925px;top:269px;width:1px;height:16px;background:#c6c6c6;"></div>
<div class="t" style="left:972.81px;top:270.74px;font-size:13.00px;color:#222;transform:scale(1.0000,1.0700);transform-origin:0 11.77px;">H</div>
<div class="r" style="left:1029px;top:269px;width:1px;height:16px;background:#c6c6c6;"></div>
<div class="t" style="left:1079.69px;top:270.74px;font-size:13.00px;color:#222;transform:scale(1.0000,1.0700);transform-origin:0 11.77px;">I</div>
<div class="r" style="left:1133px;top:269px;width:1px;height:16px;background:#c6c6c6;"></div>
<div class="t" style="left:1182.25px;top:270.74px;font-size:13.00px;color:#222;transform:scale(1.0000,1.0700);transform-origin:0 11.77px;">J</div>
<div class="r" style="left:1237px;top:269px;width:1px;height:16px;background:#c6c6c6;"></div>
<div class="t" style="left:1284.66px;top:270.74px;font-size:13.00px;color:#222;transform:scale(1.0000,1.0700);transform-origin:0 11.77px;">K</div>
<div class="r" style="left:1340px;top:269px;width:1px;height:16px;background:#c6c6c6;"></div>
<div class="t" style="left:1387.38px;top:270.74px;font-size:13.00px;color:#222;transform:scale(1.0000,1.0700);transform-origin:0 11.77px;">L</div>
<div class="r" style="left:1441px;top:269px;width:1px;height:16px;background:#c6c6c6;"></div>
<div class="t" style="left:1486.59px;top:270.74px;font-size:13.00px;color:#222;transform:scale(1.0000,1.0700);transform-origin:0 11.77px;">M</div>
<div class="r" style="left:1542px;top:269px;width:1px;height:16px;background:#c6c6c6;"></div>
<div class="t" style="left:1588.31px;top:270.74px;font-size:13.00px;color:#222;transform:scale(1.0000,1.0700);transform-origin:0 11.77px;">N</div>
<div class="r" style="left:1643px;top:269px;width:1px;height:16px;background:#c6c6c6;"></div>
<div class="t" style="left:1688.94px;top:270.74px;font-size:13.00px;color:#222;transform:scale(1.0000,1.0700);transform-origin:0 11.77px;">O</div>
<div class="r" style="left:1744px;top:269px;width:1px;height:16px;background:#c6c6c6;"></div>
<div class="t" style="left:1790.66px;top:270.74px;font-size:13.00px;color:#222;transform:scale(1.0000,1.0700);transform-origin:0 11.77px;">P</div>
<div class="r" style="left:1845px;top:269px;width:1px;height:16px;background:#c6c6c6;"></div>
<div class="r" style="left:0px;top:285px;width:1889px;height:1px;background:#ababab;"></div>
<div class="r" style="left:25px;top:286px;width:1px;height:667px;background:#9f9f9f;"></div>
<div class="r" style="left:24px;top:285px;width:2px;height:34px;background:#1f7346;"></div>
<div class="r" style="left:0px;top:318px;width:25px;height:1px;background:#bdbdbd;"></div>
<div class="r" style="left:0px;top:335px;width:25px;height:1px;background:#bdbdbd;"></div>
<div class="r" style="left:0px;top:352px;width:25px;height:1px;background:#bdbdbd;"></div>
<div class="r" style="left:0px;top:369px;width:25px;height:1px;background:#bdbdbd;"></div>
<div class="r" style="left:0px;top:386px;width:25px;height:1px;background:#bdbdbd;"></div>
<div class="r" style="left:0px;top:403px;width:25px;height:1px;background:#bdbdbd;"></div>
<div class="r" style="left:0px;top:420px;width:25px;height:1px;background:#bdbdbd;"></div>
<div class="r" style="left:0px;top:437px;width:25px;height:1px;background:#bdbdbd;"></div>
<div class="r" style="left:0px;top:454px;width:25px;height:1px;background:#bdbdbd;"></div>
<div class="r" style="left:0px;top:471px;width:25px;height:1px;background:#bdbdbd;"></div>
<div class="r" style="left:0px;top:488px;width:25px;height:1px;background:#bdbdbd;"></div>
<div class="r" style="left:0px;top:505px;width:25px;height:1px;background:#bdbdbd;"></div>
<div class="r" style="left:0px;top:522px;width:25px;height:1px;background:#bdbdbd;"></div>
<div class="r" style="left:0px;top:539px;width:25px;height:1px;background:#bdbdbd;"></div>
<div class="r" style="left:0px;top:556px;width:25px;height:1px;background:#bdbdbd;"></div>
<div class="r" style="left:0px;top:573px;width:25px;height:1px;background:#bdbdbd;"></div>
<div class="r" style="left:0px;top:590px;width:25px;height:1px;background:#bdbdbd;"></div>
<div class="r" style="left:0px;top:607px;width:25px;height:1px;background:#bdbdbd;"></div>
<div class="r" style="left:0px;top:624px;width:25px;height:1px;background:#bdbdbd;"></div>
<div class="r" style="left:0px;top:641px;width:25px;height:1px;background:#bdbdbd;"></div>
<div class="r" style="left:0px;top:658px;width:25px;height:1px;background:#bdbdbd;"></div>
<div class="r" style="left:0px;top:675px;width:25px;height:1px;background:#bdbdbd;"></div>
<div class="r" style="left:0px;top:692px;width:25px;height:1px;background:#bdbdbd;"></div>
<div class="r" style="left:0px;top:709px;width:25px;height:1px;background:#bdbdbd;"></div>
<div class="r" style="left:0px;top:726px;width:25px;height:1px;background:#bdbdbd;"></div>
<div class="r" style="left:0px;top:743px;width:25px;height:1px;background:#bdbdbd;"></div>
<div class="r" style="left:0px;top:760px;width:25px;height:1px;background:#bdbdbd;"></div>
<div class="r" style="left:0px;top:777px;width:25px;height:1px;background:#bdbdbd;"></div>
<div class="r" style="left:0px;top:794px;width:25px;height:1px;background:#bdbdbd;"></div>
<div class="r" style="left:0px;top:811px;width:25px;height:1px;background:#bdbdbd;"></div>
<div class="r" style="left:0px;top:828px;width:25px;height:1px;background:#bdbdbd;"></div>
<div class="r" style="left:0px;top:845px;width:25px;height:1px;background:#bdbdbd;"></div>
<div class="r" style="left:0px;top:862px;width:25px;height:1px;background:#bdbdbd;"></div>
<div class="r" style="left:0px;top:879px;width:25px;height:1px;background:#bdbdbd;"></div>
<div class="r" style="left:0px;top:896px;width:25px;height:1px;background:#bdbdbd;"></div>
<div class="r" style="left:0px;top:913px;width:25px;height:1px;background:#bdbdbd;"></div>
<div class="r" style="left:0px;top:930px;width:25px;height:1px;background:#bdbdbd;"></div>
<div class="r" style="left:0px;top:947px;width:25px;height:1px;background:#bdbdbd;"></div>
<div class="r" style="left:0px;top:335px;width:25px;height:1px;background:#a6a6a6;"></div>
<div class="t" style="left:9.45px;top:304.78px;font-size:12.40px;color:#1f6b40;transform:scale(1.0000,1.1000);transform-origin:0 11.22px;">1</div>
<div class="t" style="left:9.45px;top:321.78px;font-size:12.40px;color:#222;transform:scale(1.0000,1.1000);transform-origin:0 11.22px;">2</div>
<div class="t" style="left:9.45px;top:338.78px;font-size:12.40px;color:#222;transform:scale(1.0000,1.1000);transform-origin:0 11.22px;">3</div>
<div class="t" style="left:9.45px;top:355.78px;font-size:12.40px;color:#222;transform:scale(1.0000,1.1000);transform-origin:0 11.22px;">4</div>
<div class="t" style="left:9.45px;top:372.78px;font-size:12.40px;color:#222;transform:scale(1.0000,1.1000);transform-origin:0 11.22px;">5</div>
<div class="t" style="left:9.45px;top:389.78px;font-size:12.40px;color:#222;transform:scale(1.0000,1.1000);transform-origin:0 11.22px;">6</div>
<div class="t" style="left:9.45px;top:406.78px;font-size:12.40px;color:#222;transform:scale(1.0000,1.1000);transform-origin:0 11.22px;">7</div>
<div class="t" style="left:9.45px;top:423.78px;font-size:12.40px;color:#222;transform:scale(1.0000,1.1000);transform-origin:0 11.22px;">8</div>
<div class="t" style="left:9.45px;top:440.78px;font-size:12.40px;color:#222;transform:scale(1.0000,1.1000);transform-origin:0 11.22px;">9</div>
<div class="t" style="left:6.00px;top:457.78px;font-size:12.40px;color:#222;transform:scale(1.0000,1.1000);transform-origin:0 11.22px;">10</div>
<div class="t" style="left:6.46px;top:474.78px;font-size:12.40px;color:#222;transform:scale(1.0000,1.1000);transform-origin:0 11.22px;">11</div>
<div class="t" style="left:6.00px;top:491.78px;font-size:12.40px;color:#222;transform:scale(1.0000,1.1000);transform-origin:0 11.22px;">12</div>
<div class="t" style="left:6.00px;top:508.78px;font-size:12.40px;color:#222;transform:scale(1.0000,1.1000);transform-origin:0 11.22px;">13</div>
<div class="t" style="left:6.00px;top:525.78px;font-size:12.40px;color:#222;transform:scale(1.0000,1.1000);transform-origin:0 11.22px;">14</div>
<div class="t" style="left:6.00px;top:542.78px;font-size:12.40px;color:#222;transform:scale(1.0000,1.1000);transform-origin:0 11.22px;">15</div>
<div class="t" style="left:6.00px;top:559.78px;font-size:12.40px;color:#222;transform:scale(1.0000,1.1000);transform-origin:0 11.22px;">16</div>
<div class="t" style="left:6.00px;top:576.78px;font-size:12.40px;color:#222;transform:scale(1.0000,1.1000);transform-origin:0 11.22px;">17</div>
<div class="t" style="left:6.00px;top:593.78px;font-size:12.40px;color:#222;transform:scale(1.0000,1.1000);transform-origin:0 11.22px;">18</div>
<div class="t" style="left:6.00px;top:610.78px;font-size:12.40px;color:#222;transform:scale(1.0000,1.1000);transform-origin:0 11.22px;">19</div>
<div class="t" style="left:6.00px;top:627.78px;font-size:12.40px;color:#222;transform:scale(1.0000,1.1000);transform-origin:0 11.22px;">20</div>
<div class="t" style="left:6.00px;top:644.78px;font-size:12.40px;color:#222;transform:scale(1.0000,1.1000);transform-origin:0 11.22px;">21</div>
<div class="t" style="left:6.00px;top:661.78px;font-size:12.40px;color:#222;transform:scale(1.0000,1.1000);transform-origin:0 11.22px;">22</div>
<div class="t" style="left:6.00px;top:678.78px;font-size:12.40px;color:#222;transform:scale(1.0000,1.1000);transform-origin:0 11.22px;">23</div>
<div class="t" style="left:6.00px;top:695.78px;font-size:12.40px;color:#222;transform:scale(1.0000,1.1000);transform-origin:0 11.22px;">24</div>
<div class="t" style="left:6.00px;top:712.78px;font-size:12.40px;color:#222;transform:scale(1.0000,1.1000);transform-origin:0 11.22px;">25</div>
<div class="t" style="left:6.00px;top:729.78px;font-size:12.40px;color:#222;transform:scale(1.0000,1.1000);transform-origin:0 11.22px;">26</div>
<div class="t" style="left:6.00px;top:746.78px;font-size:12.40px;color:#222;transform:scale(1.0000,1.1000);transform-origin:0 11.22px;">27</div>
<div class="t" style="left:6.00px;top:763.78px;font-size:12.40px;color:#222;transform:scale(1.0000,1.1000);transform-origin:0 11.22px;">28</div>
<div class="t" style="left:6.00px;top:780.78px;font-size:12.40px;color:#222;transform:scale(1.0000,1.1000);transform-origin:0 11.22px;">29</div>
<div class="t" style="left:6.00px;top:797.78px;font-size:12.40px;color:#222;transform:scale(1.0000,1.1000);transform-origin:0 11.22px;">30</div>
<div class="t" style="left:6.00px;top:814.78px;font-size:12.40px;color:#222;transform:scale(1.0000,1.1000);transform-origin:0 11.22px;">31</div>
<div class="t" style="left:6.00px;top:831.78px;font-size:12.40px;color:#222;transform:scale(1.0000,1.1000);transform-origin:0 11.22px;">32</div>
<div class="t" style="left:6.00px;top:848.78px;font-size:12.40px;color:#222;transform:scale(1.0000,1.1000);transform-origin:0 11.22px;">33</div>
<div class="t" style="left:6.00px;top:865.78px;font-size:12.40px;color:#222;transform:scale(1.0000,1.1000);transform-origin:0 11.22px;">34</div>
<div class="t" style="left:6.00px;top:882.78px;font-size:12.40px;color:#222;transform:scale(1.0000,1.1000);transform-origin:0 11.22px;">35</div>
<div class="t" style="left:6.00px;top:899.78px;font-size:12.40px;color:#222;transform:scale(1.0000,1.1000);transform-origin:0 11.22px;">36</div>
<div class="t" style="left:6.00px;top:916.78px;font-size:12.40px;color:#222;transform:scale(1.0000,1.1000);transform-origin:0 11.22px;">37</div>
<div class="t" style="left:6.00px;top:933.78px;font-size:12.40px;color:#222;transform:scale(1.0000,1.1000);transform-origin:0 11.22px;">38</div>
<div class="t" style="left:6.00px;top:950.78px;font-size:12.40px;color:#222;transform:scale(1.0000,1.1000);transform-origin:0 11.22px;">39</div>
<div class="r" style="left:329px;top:284px;width:104px;height:36px;background:transparent;border:2px solid #1f7346;box-sizing:border-box;"></div>
<div class="r" style="left:331px;top:286px;width:100px;height:32px;background:transparent;border:1px solid #fff;box-sizing:border-box;"></div>
<div class="r" style="left:428px;top:315px;width:6px;height:6px;background:#1f7346;border:1px solid #fff;box-sizing:content-box;margin:-1px;"></div>
<div class="r" style="left:432px;top:292px;width:25px;height:25px;background:linear-gradient(#fff,#f0f0f0);border:1px solid #a7acb5;box-sizing:border-box;"></div>
<svg style="left:439px;top:301px" width="12" height="8"><path d="M1 1.5 H10.5 L5.75 6.5 Z" fill="#555"/></svg>
<div class="r" style="left:1889px;top:269px;width:31px;height:684px;background:#e6e6e6;"></div>
<div class="r" style="left:1890px;top:285px;width:1px;height:668px;background:#ececec;"></div>
<div class="r" style="left:1889px;top:285px;width:1px;height:668px;background:#a0a0a0;"></div>
<div class="r" style="left:1892px;top:295px;width:25px;height:658px;background:#f0f0f0;"></div>
<div class="r" style="left:1892px;top:270px;width:25px;height:25px;background:#fff;border:1px solid #a0a0a0;box-sizing:border-box;"></div>
<svg style="left:1897px;top:277px" width="14" height="10"><path d="M1.5 8 L7 2 L12.5 8 Z" fill="#333"/></svg>
<div class="r" style="left:1892px;top:295px;width:25px;height:311px;background:#fff;border:1px solid #a0a0a0;box-sizing:border-box;"></div>
<div class="r" style="left:0px;top:953px;width:1920px;height:34px;background:#e6e6e6;"></div>
<div class="r" style="left:0px;top:953px;width:794px;height:1px;background:#a0a0a0;"></div>
<div class="r" style="left:913px;top:953px;width:976px;height:1px;background:#a0a0a0;"></div>
<svg style="left:26px;top:962px" width="12" height="16"><path d="M9.5 2 V13.5 L2.5 7.75 Z" fill="#b5b5b5"/></svg>
<svg style="left:61px;top:962px" width="12" height="16"><path d="M2.5 2 V13.5 L9.5 7.75 Z" fill="#b5b5b5"/></svg>
<div class="r" style="left:118px;top:957px;width:1px;height:26px;background:#9a9a9a;"></div>
<div class="r" style="left:279px;top:957px;width:1px;height:26px;background:#9a9a9a;"></div>
<div class="r" style="left:389px;top:957px;width:1px;height:26px;background:#9a9a9a;"></div>
<div class="r" style="left:571px;top:957px;width:1px;height:26px;background:#9a9a9a;"></div>
<div class="r" style="left:1090px;top:957px;width:1px;height:26px;background:#9a9a9a;"></div>
<div class="r" style="left:1267px;top:957px;width:1px;height:26px;background:#9a9a9a;"></div>
<div class="t" style="left:135.75px;top:957.62px;font-size:19.20px;color:#3b3b3b;transform:scale(0.9954,1.0000);transform-origin:0 17.38px;">Tóm tắt KQKD</div>
<div class="t" style="left:295.75px;top:957.62px;font-size:19.20px;color:#3b3b3b;transform:scale(0.9964,1.0000);transform-origin:0 17.38px;">Diện tích</div>
<div class="t" style="left:407.50px;top:957.62px;font-size:19.20px;color:#3b3b3b;transform:scale(1.0199,1.0000);transform-origin:0 17.38px;">Tổng vốn đầu tư</div>
<div class="t" style="left:590.50px;top:957.62px;font-size:19.20px;color:#3b3b3b;transform:scale(1.0190,1.0000);transform-origin:0 17.38px;">Thông số kinh doanh</div>
<div class="t" style="left:931.00px;top:957.62px;font-size:19.20px;color:#3b3b3b;transform:scale(1.0039,1.0000);transform-origin:0 17.38px;">Độ nhạy 2 chiều</div>
<div class="t" style="left:1108.90px;top:957.62px;font-size:19.20px;color:#3b3b3b;">Độ nhạy 1 chiều</div>
<div class="r" style="left:794px;top:953px;width:119px;height:31px;background:#fff;"></div>
<div class="r" style="left:794px;top:953px;width:1px;height:31px;background:#a0a0a0;"></div>
<div class="r" style="left:912px;top:953px;width:1px;height:31px;background:#a0a0a0;"></div>
<div class="r" style="left:794px;top:982px;width:119px;height:2px;background:#1f7346;"></div>
<div class="t" style="left:807.00px;top:957.62px;font-size:19.20px;color:#1e6e42;font-weight:bold;transform:scale(1.0438,1.0000);transform-origin:0 17.38px;">Dòng tiền</div>
<svg style="left:1306px;top:959px" width="24" height="24"><circle cx="11.9" cy="10.9" r="10.2" fill="none" stroke="#707070" stroke-width="1.4"/><path d="M12 6 V16 M7 11 H17" stroke="#666" stroke-width="1.8"/></svg>
<div class="r" style="left:1352px;top:962px;width:3px;height:3px;background:#a0a0a0;border-radius:1px;"></div>
<div class="r" style="left:1352px;top:968px;width:3px;height:3px;background:#a0a0a0;border-radius:1px;"></div>
<div class="r" style="left:1352px;top:974px;width:3px;height:3px;background:#a0a0a0;border-radius:1px;"></div>
<div class="r" style="left:1372px;top:957px;width:516px;height:25px;background:#f0f0f0;"></div>
<div class="r" style="left:1372px;top:957px;width:25px;height:25px;background:#fff;border:1px solid #a0a0a0;box-sizing:border-box;"></div>
<svg style="left:1378px;top:962px" width="12" height="16"><path d="M9 1.6 V12.6 L3 7.1 Z" fill="#222"/></svg>
<div class="r" style="left:1397px;top:957px;width:377px;height:25px;background:#fff;border:1px solid #999;box-sizing:border-box;"></div>
<div class="r" style="left:1863px;top:957px;width:25px;height:25px;background:#fff;border:1px solid #a0a0a0;box-sizing:border-box;"></div>
<svg style="left:1871px;top:962px" width="12" height="16"><path d="M3 1.6 V12.6 L9 7.1 Z" fill="#222"/></svg>
<div class="r" style="left:0px;top:987px;width:1920px;height:1px;background:#c8c6c4;"></div>
<div class="r" style="left:1892px;top:929px;width:25px;height:25px;background:#fff;border:1px solid #a0a0a0;box-sizing:border-box;"></div>
<svg style="left:1897px;top:936px" width="14" height="10"><path d="M1.5 2 L12.5 2 L7 8 Z" fill="#333"/></svg>
<div class="r" style="left:0px;top:988px;width:1920px;height:30px;background:#f3f2f1;"></div>
<div class="t" style="left:10.50px;top:996.02px;font-size:16.00px;color:#444;transform:scale(0.9081,1.0000);transform-origin:0 14.48px;">Ready</div>
<svg style="left:76px;top:988px" width="32" height="30" viewBox="0 0 32 30"><g fill="none" stroke="#444" stroke-width="1.5" stroke-linejoin="round" stroke-linecap="round">
<circle cx="14.45" cy="8.6" r="2.5"/><path d="M18.3 14.2 L21.8 12.8 Q23.6 11.8 22.6 10 Q21.8 9 20 9.6 L16.9 10.9 Q14.45 11.7 12 10.9 L8.9 9.6 Q7 9 6.3 10.4 Q5.8 12 7.6 12.8 L10.3 13.9 V18.3 L8.9 23.4 Q8.7 25.6 10.6 25.7 Q12 25.6 12.3 23.9 L14.45 19.4 L15.9 22.4"/>
<path d="M16.5 16.2 L26 26 M26 16.2 L16.5 26"/></g></svg>
<div class="t" style="left:108.75px;top:996.02px;font-size:16.00px;color:#444;transform:scale(0.9515,1.0000);transform-origin:0 14.48px;">Accessibility: Investigate</div>
<div class="r" style="left:1475px;top:987px;width:60px;height:31px;background:#d2d0ce;"></div>
<svg style="left:1492px;top:991px" width="24" height="24" viewBox="0 0 24 24"><g fill="none" stroke="#444" stroke-width="1.4">
<rect x="2.5" y="2.5" width="19" height="19"/><path d="M2.5 8.8 H21.5 M2.5 15.2 H21.5 M8.8 2.5 V21.5 M15.2 2.5 V21.5"/></g></svg>
<svg style="left:1552px;top:991px" width="26" height="24" viewBox="0 0 26 24"><g fill="#fff" stroke="#444" stroke-width="1.4">
<rect x="3.4" y="3.1" width="19" height="18.4"/><rect x="8.1" y="6.6" width="9.8" height="11.1"/><path d="M10.2 9.2 H15.8 M10.2 12.2 H15.8 M10.2 15.2 H15.8" fill="none"/></g></svg>
<svg style="left:1612px;top:991px" width="26" height="24" viewBox="0 0 26 24"><g fill="#fff" stroke="#444" stroke-width="1.4">
<rect x="3.4" y="3.1" width="19.2" height="18.4"/><path d="M9.2 3.1 V13.4 H3.4 M15.5 3.1 V13.4 H9.2" fill="none"/></g></svg>
<div class="r" style="left:1663px;top:1003px;width:12px;height:1.3px;background:#555;"></div>
<div class="r" style="left:1683px;top:1003px;width:148px;height:2px;background:#555;"></div>
<div class="r" style="left:1722px;top:995px;width:8px;height:17px;background:#444;"></div>
<div class="r" style="left:1756px;top:998.5px;width:2px;height:9px;background:#444;"></div>
<div class="r" style="left:1839px;top:1003px;width:12px;height:1.2px;background:#555;"></div>
<div class="r" style="left:1844.4px;top:997.5px;width:1.2px;height:12px;background:#555;"></div>
<div class="t" style="left:1869.30px;top:995.72px;font-size:16.00px;color:#505050;transform:scale(0.9493,1.0000);transform-origin:0 14.48px;">60%</div>
</body></html>
